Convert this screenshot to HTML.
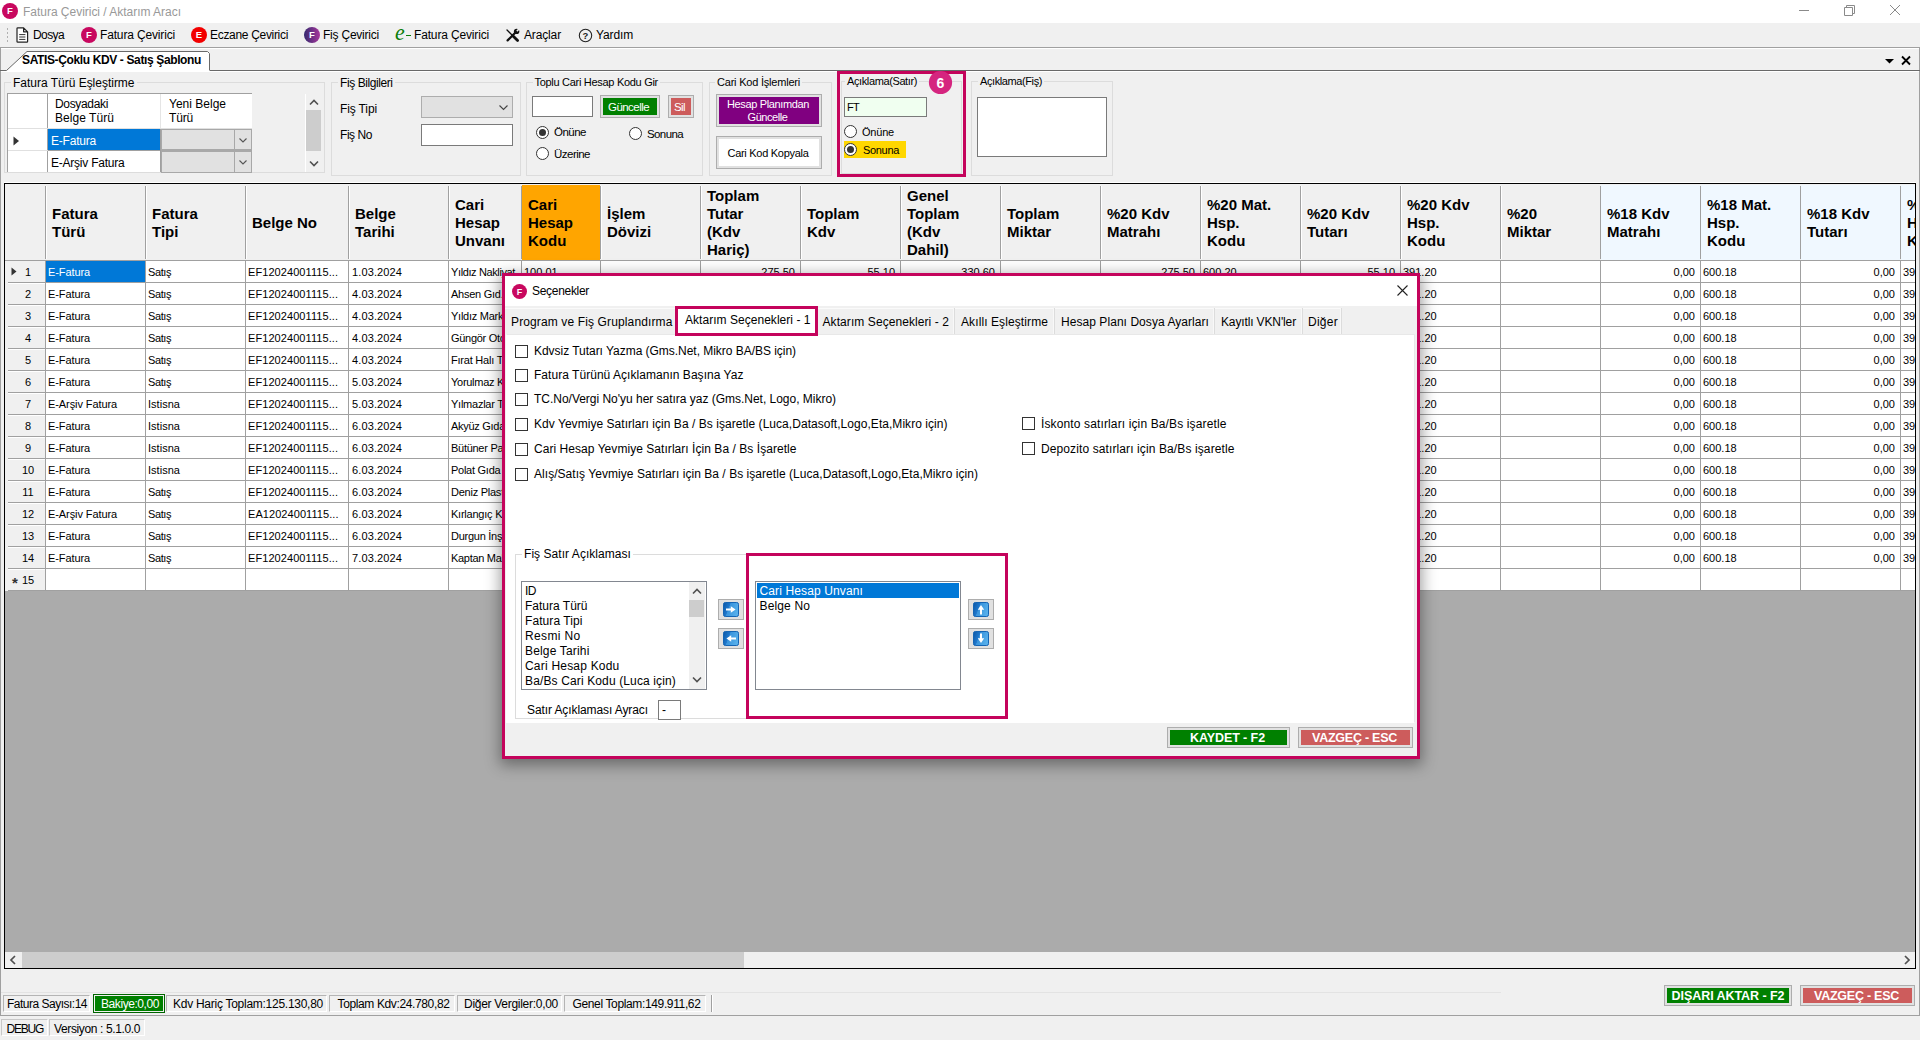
<!DOCTYPE html>
<html lang="tr"><head><meta charset="utf-8"><title>Fatura Çevirici / Aktarım Aracı</title>
<style>
html,body{margin:0;padding:0;}
body{width:1920px;height:1040px;overflow:hidden;background:#f0f0f0;position:relative;font-family:"Liberation Sans",sans-serif;font-size:11px;color:#000;}
.b{position:absolute;box-sizing:border-box;}
.t{position:absolute;white-space:nowrap;display:block;}
svg{position:absolute;overflow:visible;}
.grp{position:absolute;box-sizing:border-box;border:1px solid #dcdcdc;}
.btn{position:absolute;box-sizing:border-box;border:1px solid #adadad;background:#e1e1e1;}
.rad{position:absolute;box-sizing:border-box;width:13px;height:13px;border:1px solid #333;border-radius:50%;background:#fff;}
.rad.on::after{content:"";position:absolute;left:2px;top:2px;width:7px;height:7px;border-radius:50%;background:#333;}
.chk{position:absolute;box-sizing:border-box;width:13px;height:13px;border:1px solid #333;background:#fff;}
</style></head><body>

<div class="b" style="left:0px;top:0px;width:1920px;height:23px;background:#fff;"></div>
<svg style="left:2px;top:3px" width="16" height="16" viewBox="0 0 16 16"><circle cx="8" cy="8" r="8" fill="#c8085f"/><text x="8" y="11.42" font-family="Liberation Sans,sans-serif" font-weight="bold" font-size="9.5" fill="#fff" text-anchor="middle">F</text></svg>
<span class="t" style="left:23.0px;top:4.0px;height:17px;line-height:17px;font-size:12px;letter-spacing:-0.023px;color:#999;">Fatura Çevirici / Aktarım Aracı</span>
<svg style="left:1790px;top:0" width="130" height="23" viewBox="0 0 130 23" fill="none" stroke="#8a8a8a" stroke-width="1"><path d="M9 10.5H19"/><path d="M54.5 7.5h8v8h-8z M56.5 7.5v-2h8v8h-2"/><path d="M100 5l10 10M110 5l-10 10"/></svg>
<div class="b" style="left:7px;top:28px;width:1px;height:2px;background:#b0b0b0;"></div>
<div class="b" style="left:7px;top:32px;width:1px;height:2px;background:#b0b0b0;"></div>
<div class="b" style="left:7px;top:36px;width:1px;height:2px;background:#b0b0b0;"></div>
<div class="b" style="left:7px;top:40px;width:1px;height:2px;background:#b0b0b0;"></div>
<svg style="left:16px;top:27px" width="13" height="16" viewBox="0 0 13 16" fill="#fff" stroke="#222" stroke-width="1.2"><path d="M1 1.6Q1 0.8 1.8 0.8H7.6L11.6 4.8V14.4Q11.6 15.2 10.8 15.2H1.8Q1 15.2 1 14.4z M7.6 0.8V4.8H11.6" stroke-linejoin="round"/><path d="M3.2 7.6h6.2M3.2 10h6.2M3.2 12.4h6.2" stroke="#333" stroke-width="1"/></svg>
<span class="t" style="left:33.0px;top:26.5px;height:17px;line-height:17px;font-size:12px;letter-spacing:-0.603px;color:#000;">Dosya</span>
<svg style="left:81px;top:27px" width="16" height="16" viewBox="0 0 16 16"><circle cx="8" cy="8" r="8" fill="#c8085f"/><text x="8" y="11.42" font-family="Liberation Sans,sans-serif" font-weight="bold" font-size="9.5" fill="#fff" text-anchor="middle">F</text></svg>
<span class="t" style="left:100.0px;top:26.5px;height:17px;line-height:17px;font-size:12px;letter-spacing:-0.157px;color:#000;">Fatura Çevirici</span>
<svg style="left:191px;top:27px" width="16" height="16" viewBox="0 0 16 16"><circle cx="8" cy="8" r="8" fill="#f20000"/><text x="8" y="11.42" font-family="Liberation Sans,sans-serif" font-weight="bold" font-size="9.5" fill="#fff" text-anchor="middle">E</text></svg>
<span class="t" style="left:210.0px;top:26.5px;height:17px;line-height:17px;font-size:12px;letter-spacing:-0.313px;color:#000;">Eczane Çevirici</span>
<svg width="0" height="0" style="left:0;top:0"><defs><linearGradient id="fg1" x1="0" y1="0" x2="1" y2="0"><stop offset="0" stop-color="#35296f"/><stop offset="1" stop-color="#a8389c"/></linearGradient></defs></svg>
<svg style="left:304px;top:27px" width="16" height="16" viewBox="0 0 16 16"><circle cx="8" cy="8" r="8" fill="url(#fg1)"/><text x="8" y="11.42" font-family="Liberation Sans,sans-serif" font-weight="bold" font-size="9.5" fill="#fff" text-anchor="middle">F</text></svg>
<span class="t" style="left:323.0px;top:26.5px;height:17px;line-height:17px;font-size:12px;letter-spacing:-0.222px;color:#000;">Fiş Çevirici</span>
<span class="t" style="left:395px;top:20px;height:26px;line-height:26px;font-size:23px;font-style:italic;color:#0a7d0a;font-family:'Liberation Serif',serif;transform:scaleX(0.95);transform-origin:left;">e</span>
<div class="b" style="left:405.5px;top:34.5px;width:5.5px;height:1.6px;background:#0a7d0a;"></div>
<span class="t" style="left:414.0px;top:26.5px;height:17px;line-height:17px;font-size:12px;letter-spacing:-0.157px;color:#000;">Fatura Çevirici</span>
<svg style="left:505px;top:28px" width="15" height="15" viewBox="0 0 15 15" fill="none" stroke="#111" stroke-linecap="round"><path d="M2 2L7.5 7.5" stroke-width="1.3"/><path d="M8 8L12.6 12.6" stroke-width="2.8"/><path d="M11.2 3.8L2.6 12.4" stroke-width="2.2"/><circle cx="11.6" cy="3.4" r="2.7" fill="#111" stroke="none"/><path d="M11.9 3.1L14.5 0.5" stroke="#f0f0f0" stroke-width="1.7" stroke-linecap="butt"/></svg>
<span class="t" style="left:524.0px;top:26.5px;height:17px;line-height:17px;font-size:12px;letter-spacing:-0.144px;color:#000;">Araçlar</span>
<svg style="left:578px;top:28px" width="15" height="15" viewBox="0 0 15 15"><circle cx="7.5" cy="7.5" r="6.2" fill="none" stroke="#222" stroke-width="1.1"/><text x="7.5" y="11" font-family="Liberation Sans,sans-serif" font-size="9.5" font-weight="bold" text-anchor="middle" fill="#222">?</text></svg>
<span class="t" style="left:596.0px;top:26.5px;height:17px;line-height:17px;font-size:12px;letter-spacing:-0.131px;color:#000;">Yardım</span>
<div class="b" style="left:0px;top:47px;width:1920px;height:1px;background:#a0a0a0;"></div>
<div class="b" style="left:0px;top:48px;width:1px;height:990px;background:#a0a0a0;"></div>
<div class="b" style="left:1919px;top:48px;width:1px;height:968px;background:#a0a0a0;"></div>
<div class="b" style="left:210px;top:70px;width:1710px;height:1px;background:#696969;"></div>
<div class="b" style="left:1px;top:71px;width:1918px;height:1px;background:#fff;"></div>
<div class="b" style="left:1px;top:48px;width:1918px;height:1px;background:#fff;"></div>
<svg style="left:0;top:48px" width="220" height="24" viewBox="0 0 220 24"><path d="M6.5 22.5 L27 3.5 H207.5 L209.5 5.5 V24 H5z" fill="#fff" stroke="none"/><path d="M0 22.5 H6.5 L27 3.5 H207.5 L209.5 5.5 V22.5" fill="none" stroke="#696969" stroke-width="1"/></svg>
<span class="t" style="left:22.0px;top:52.0px;height:17px;line-height:17px;font-size:12px;font-weight:bold;letter-spacing:-0.370px;color:#000;">SATIS-Çoklu KDV - Satış Şablonu</span>
<svg style="left:1884px;top:55px" width="28" height="12" viewBox="0 0 28 12"><path d="M1 4h9l-4.5 4.5z" fill="#000"/><path d="M18 1.5l8 8M26 1.5l-8 8" stroke="#000" stroke-width="1.8" fill="none"/></svg>
<div class="grp" style="left:4px;top:82px;width:321px;height:91px;"></div>
<div class="b" style="left:11px;top:80px;width:125.5px;height:5px;background:#f0f0f0;"></div>
<span class="t" style="left:13.0px;top:75.0px;height:17px;line-height:17px;font-size:12px;letter-spacing:-0.014px;color:#000;">Fatura Türü Eşleştirme</span>
<div class="b" style="left:7px;top:93px;width:245px;height:79px;background:#fff;border-left:1px solid #a0a0a0;border-top:1px solid #a0a0a0;"></div>
<div class="b" style="left:47px;top:94px;width:1px;height:78px;background:#a0a0a0;"></div>
<div class="b" style="left:160px;top:94px;width:1px;height:35px;background:#e5e5e5;"></div>
<div class="b" style="left:8px;top:128px;width:244px;height:1px;background:#e0e0e0;"></div>
<div class="b" style="left:8px;top:150px;width:40px;height:1px;background:#e0e0e0;"></div>
<div class="b" style="left:48px;top:150px;width:112px;height:1px;background:#a0a0a0;"></div>
<div class="b" style="left:160px;top:129px;width:1px;height:43px;background:#a0a0a0;"></div>
<span class="t" style="left:55.0px;top:96.0px;height:17px;line-height:17px;font-size:12px;letter-spacing:-0.336px;color:#000;">Dosyadaki</span>
<span class="t" style="left:55.0px;top:110.0px;height:17px;line-height:17px;font-size:12px;letter-spacing:0.052px;color:#000;">Belge Türü</span>
<span class="t" style="left:169.0px;top:96.0px;height:17px;line-height:17px;font-size:12px;letter-spacing:0.006px;color:#000;">Yeni Belge</span>
<span class="t" style="left:169.0px;top:110.0px;height:17px;line-height:17px;font-size:12px;letter-spacing:-0.168px;color:#000;">Türü</span>
<div class="b" style="left:48px;top:129px;width:112px;height:21px;background:#0078d7;"></div>
<span class="t" style="left:51.0px;top:133.0px;height:17px;line-height:17px;font-size:12px;letter-spacing:-0.210px;color:#fff;">E-Fatura</span>
<span class="t" style="left:51.0px;top:155.0px;height:17px;line-height:17px;font-size:12px;letter-spacing:-0.227px;color:#000;">E-Arşiv Fatura</span>
<svg style="left:13px;top:136px" width="7" height="10" viewBox="0 0 7 10"><path d="M0.5 0.5v9l5.5-4.5z" fill="#333"/></svg>
<div class="b" style="left:161px;top:129px;width:91px;height:22px;background:#a8a8a8;"></div>
<div class="b" style="left:162px;top:130px;width:72px;height:19px;background:#e1e1e1;"></div>
<div class="b" style="left:235px;top:130px;width:16px;height:19px;background:#e1e1e1;"></div>
<svg style="left:238.5px;top:137.75px" width="8" height="4.5" viewBox="0 0 8 4.5"><path d="M0.5 0.5L4 4L7.5 0.5" fill="none" stroke="#555" stroke-width="1.1"/></svg>
<div class="b" style="left:161px;top:151px;width:91px;height:22px;background:#a8a8a8;"></div>
<div class="b" style="left:162px;top:152px;width:72px;height:20px;background:#e1e1e1;"></div>
<div class="b" style="left:235px;top:152px;width:16px;height:20px;background:#e1e1e1;"></div>
<svg style="left:238.5px;top:159.75px" width="8" height="4.5" viewBox="0 0 8 4.5"><path d="M0.5 0.5L4 4L7.5 0.5" fill="none" stroke="#555" stroke-width="1.1"/></svg>
<div class="b" style="left:305px;top:94px;width:1px;height:78px;background:#fff;"></div>
<div class="b" style="left:306px;top:94px;width:16px;height:78px;background:#f0f0f0;"></div>
<div class="b" style="left:306px;top:110px;width:15px;height:41px;background:#cdcdcd;"></div>
<svg style="left:308.5px;top:99px" width="10" height="7" viewBox="0 0 10 7"><path d="M1 5.5L5 1.5L9 5.5" fill="none" stroke="#505050" stroke-width="1.6"/></svg>
<svg style="left:308.5px;top:160px" width="10" height="7" viewBox="0 0 10 7"><path d="M1 1.5L5 5.5L9 1.5" fill="none" stroke="#505050" stroke-width="1.6"/></svg>
<div class="grp" style="left:331px;top:82px;width:190px;height:94px;"></div>
<div class="b" style="left:338px;top:80px;width:56.5px;height:5px;background:#f0f0f0;"></div>
<span class="t" style="left:340.0px;top:75.0px;height:17px;line-height:17px;font-size:12px;letter-spacing:-0.424px;color:#000;">Fiş Bilgileri</span>
<span class="t" style="left:340.0px;top:100.5px;height:17px;line-height:17px;font-size:12px;letter-spacing:-0.125px;color:#000;">Fiş Tipi</span>
<span class="t" style="left:340.0px;top:127.0px;height:17px;line-height:17px;font-size:12px;letter-spacing:-0.445px;color:#000;">Fiş No</span>
<div class="b" style="left:421px;top:96px;width:92px;height:22px;background:#e1e1e1;border:1px solid #adadad;"></div>
<svg style="left:499px;top:105px" width="9" height="5" viewBox="0 0 9 5"><path d="M0.5 0.5L4.5 4.5L8.5 0.5" fill="none" stroke="#444" stroke-width="1.1"/></svg>
<div class="b" style="left:421px;top:124px;width:92px;height:22px;background:#fff;border:1px solid #7a7a7a;"></div>
<div class="grp" style="left:526px;top:82px;width:177px;height:94px;"></div>
<div class="b" style="left:532.5px;top:80px;width:127.5px;height:5px;background:#f0f0f0;"></div>
<span class="t" style="left:534.5px;top:75.0px;height:15px;line-height:15px;font-size:11px;letter-spacing:-0.294px;color:#000;">Toplu Cari Hesap Kodu Gir</span>
<div class="b" style="left:532px;top:96px;width:61px;height:21px;background:#fff;border:1px solid #7a7a7a;"></div>
<div class="b" style="left:600px;top:95px;width:60px;height:23px;background:#e1e1e1;border:1px solid #adadad;"></div>
<div class="b" style="left:603px;top:98px;width:54px;height:17px;background:#008000;"></div>
<span class="t" style="left:608.0px;top:98.5px;height:16px;line-height:16px;font-size:11.5px;letter-spacing:-0.549px;color:#fff;">Güncelle</span>
<div class="b" style="left:668px;top:95px;width:26px;height:23px;background:#e1e1e1;border:1px solid #adadad;"></div>
<div class="b" style="left:671px;top:98px;width:20px;height:17px;background:#cd5c5c;"></div>
<span class="t" style="left:674.0px;top:98.5px;height:16px;line-height:16px;font-size:11.5px;letter-spacing:-0.593px;color:#fff;">Sil</span>
<div class="rad on" style="left:535.5px;top:125.5px;"></div>
<span class="t" style="left:554.0px;top:123.5px;height:16px;line-height:16px;font-size:11.5px;letter-spacing:-0.506px;color:#000;">Önüne</span>
<div class="rad" style="left:628.5px;top:127px;"></div>
<span class="t" style="left:647.0px;top:125.5px;height:16px;line-height:16px;font-size:11.5px;letter-spacing:-0.609px;color:#000;">Sonuna</span>
<div class="rad" style="left:535.5px;top:147px;"></div>
<span class="t" style="left:554.0px;top:145.5px;height:16px;line-height:16px;font-size:11.5px;letter-spacing:-0.518px;color:#000;">Üzerine</span>
<div class="grp" style="left:709px;top:82px;width:123px;height:94px;"></div>
<div class="b" style="left:715px;top:80px;width:87px;height:5px;background:#f0f0f0;"></div>
<span class="t" style="left:717.0px;top:75.0px;height:15px;line-height:15px;font-size:11px;letter-spacing:-0.211px;color:#000;">Cari Kod İşlemleri</span>
<div class="b" style="left:716px;top:94px;width:106px;height:33px;background:#e1e1e1;border:1px solid #adadad;"></div>
<div class="b" style="left:719px;top:97px;width:100px;height:27px;background:#800080;"></div>
<span class="t" style="left:727.0px;top:96.5px;height:15px;line-height:15px;font-size:11px;letter-spacing:-0.363px;color:#fff;">Hesap Planımdan</span>
<span class="t" style="left:747.5px;top:109.5px;height:15px;line-height:15px;font-size:11px;letter-spacing:-0.427px;color:#fff;">Güncelle</span>
<div class="b" style="left:716px;top:136px;width:106px;height:33px;background:#e1e1e1;border:1px solid #adadad;"></div>
<div class="b" style="left:719px;top:139px;width:100px;height:27px;background:#fff;"></div>
<span class="t" style="left:727.5px;top:145.5px;height:15px;line-height:15px;font-size:11px;letter-spacing:-0.288px;color:#000;">Cari Kod Kopyala</span>
<div class="b" style="left:837px;top:70.5px;width:129px;height:106.5px;border:3px solid #c4045c;"></div>
<div class="grp" style="left:841px;top:81px;width:121px;height:93px;"></div>
<div class="b" style="left:845px;top:79px;width:74px;height:5px;background:#f0f0f0;"></div>
<span class="t" style="left:847.0px;top:74.0px;height:15px;line-height:15px;font-size:11px;letter-spacing:-0.386px;color:#000;">Açıklama(Satır)</span>
<div class="b" style="left:844px;top:97px;width:83px;height:20px;background:#f0fff0;border:1px solid #7a7a7a;"></div>
<span class="t" style="left:847.0px;top:99.5px;height:15px;line-height:15px;font-size:11px;letter-spacing:-0.719px;color:#000;">FT</span>
<div class="rad" style="left:843.5px;top:125px;"></div>
<span class="t" style="left:862.0px;top:124.5px;height:15px;line-height:15px;font-size:11px;letter-spacing:-0.205px;color:#000;">Önüne</span>
<div class="b" style="left:844px;top:141px;width:62px;height:17px;background:#ffd700;"></div>
<div class="rad on" style="left:843.5px;top:143px;"></div>
<span class="t" style="left:863.0px;top:142.5px;height:15px;line-height:15px;font-size:11px;letter-spacing:-0.321px;color:#000;">Sonuna</span>
<svg style="left:929px;top:70.5px" width="23" height="23" viewBox="0 0 23 23"><circle cx="11.5" cy="11.5" r="11.6" fill="#d5257f"/><text x="11.5" y="16.5" font-family="Liberation Sans,sans-serif" font-weight="bold" font-size="14" fill="#fff" text-anchor="middle">6</text></svg>
<div class="grp" style="left:971px;top:81px;width:142px;height:95px;"></div>
<div class="b" style="left:978px;top:79px;width:66px;height:5px;background:#f0f0f0;"></div>
<span class="t" style="left:980.0px;top:74.0px;height:15px;line-height:15px;font-size:11px;letter-spacing:-0.402px;color:#000;">Açıklama(Fiş)</span>
<div class="b" style="left:977px;top:97px;width:130px;height:60px;background:#fff;border:1px solid #7a7a7a;"></div>
<div class="b" style="left:4px;top:182px;width:1912px;height:1px;background:#fff;"></div>
<div class="b" style="left:4px;top:183px;width:1912px;height:786px;background:#ababab;border:1px solid #000;"></div>
<div class="b" style="left:5px;top:184px;width:1910px;height:77px;background:#f0f0f0;overflow:hidden;"></div>
<div class="b" style="left:5px;top:260px;width:1910px;height:1px;background:#a0a0a0;"></div>
<div class="b" style="left:5px;top:184px;width:1910px;height:407px;overflow:hidden;">
<div class="b" style="left:40px;top:2px;width:1px;height:73px;background:#a0a0a0;"></div>
<div class="b" style="left:41px;top:2px;width:1px;height:73px;background:#fff;"></div>
<div class="b" style="left:140px;top:2px;width:1px;height:73px;background:#a0a0a0;"></div>
<div class="b" style="left:141px;top:2px;width:1px;height:73px;background:#fff;"></div>
<span class="t" style="left:47.0px;top:20.5px;height:18px;line-height:18px;font-size:15px;font-weight:bold;color:#000;">Fatura</span>
<span class="t" style="left:47.0px;top:38.5px;height:18px;line-height:18px;font-size:15px;font-weight:bold;color:#000;">Türü</span>
<div class="b" style="left:240px;top:2px;width:1px;height:73px;background:#a0a0a0;"></div>
<div class="b" style="left:241px;top:2px;width:1px;height:73px;background:#fff;"></div>
<span class="t" style="left:147.0px;top:20.5px;height:18px;line-height:18px;font-size:15px;font-weight:bold;color:#000;">Fatura</span>
<span class="t" style="left:147.0px;top:38.5px;height:18px;line-height:18px;font-size:15px;font-weight:bold;color:#000;">Tipi</span>
<div class="b" style="left:343px;top:2px;width:1px;height:73px;background:#a0a0a0;"></div>
<div class="b" style="left:344px;top:2px;width:1px;height:73px;background:#fff;"></div>
<span class="t" style="left:247.0px;top:29.5px;height:18px;line-height:18px;font-size:15px;font-weight:bold;color:#000;">Belge No</span>
<div class="b" style="left:443px;top:2px;width:1px;height:73px;background:#a0a0a0;"></div>
<div class="b" style="left:444px;top:2px;width:1px;height:73px;background:#fff;"></div>
<span class="t" style="left:350.0px;top:20.5px;height:18px;line-height:18px;font-size:15px;font-weight:bold;color:#000;">Belge</span>
<span class="t" style="left:350.0px;top:38.5px;height:18px;line-height:18px;font-size:15px;font-weight:bold;color:#000;">Tarihi</span>
<div class="b" style="left:516px;top:2px;width:1px;height:73px;background:#a0a0a0;"></div>
<div class="b" style="left:517px;top:2px;width:1px;height:73px;background:#fff;"></div>
<span class="t" style="left:450.0px;top:11.5px;height:18px;line-height:18px;font-size:15px;font-weight:bold;color:#000;">Cari</span>
<span class="t" style="left:450.0px;top:29.5px;height:18px;line-height:18px;font-size:15px;font-weight:bold;color:#000;">Hesap</span>
<span class="t" style="left:450.0px;top:47.5px;height:18px;line-height:18px;font-size:15px;font-weight:bold;color:#000;">Unvanı</span>
<div class="b" style="left:517px;top:1px;width:78px;height:75px;background:#ffa500;"></div>
<div class="b" style="left:595px;top:2px;width:1px;height:73px;background:#a0a0a0;"></div>
<div class="b" style="left:596px;top:2px;width:1px;height:73px;background:#fff;"></div>
<span class="t" style="left:523.0px;top:11.5px;height:18px;line-height:18px;font-size:15px;font-weight:bold;color:#000;">Cari</span>
<span class="t" style="left:523.0px;top:29.5px;height:18px;line-height:18px;font-size:15px;font-weight:bold;color:#000;">Hesap</span>
<span class="t" style="left:523.0px;top:47.5px;height:18px;line-height:18px;font-size:15px;font-weight:bold;color:#000;">Kodu</span>
<div class="b" style="left:695px;top:2px;width:1px;height:73px;background:#a0a0a0;"></div>
<div class="b" style="left:696px;top:2px;width:1px;height:73px;background:#fff;"></div>
<span class="t" style="left:602.0px;top:20.5px;height:18px;line-height:18px;font-size:15px;font-weight:bold;color:#000;">İşlem</span>
<span class="t" style="left:602.0px;top:38.5px;height:18px;line-height:18px;font-size:15px;font-weight:bold;color:#000;">Dövizi</span>
<div class="b" style="left:795px;top:2px;width:1px;height:73px;background:#a0a0a0;"></div>
<div class="b" style="left:796px;top:2px;width:1px;height:73px;background:#fff;"></div>
<span class="t" style="left:702.0px;top:2.5px;height:18px;line-height:18px;font-size:15px;font-weight:bold;color:#000;">Toplam</span>
<span class="t" style="left:702.0px;top:20.5px;height:18px;line-height:18px;font-size:15px;font-weight:bold;color:#000;">Tutar</span>
<span class="t" style="left:702.0px;top:38.5px;height:18px;line-height:18px;font-size:15px;font-weight:bold;color:#000;">(Kdv</span>
<span class="t" style="left:702.0px;top:56.5px;height:18px;line-height:18px;font-size:15px;font-weight:bold;color:#000;">Hariç)</span>
<div class="b" style="left:895px;top:2px;width:1px;height:73px;background:#a0a0a0;"></div>
<div class="b" style="left:896px;top:2px;width:1px;height:73px;background:#fff;"></div>
<span class="t" style="left:802.0px;top:20.5px;height:18px;line-height:18px;font-size:15px;font-weight:bold;color:#000;">Toplam</span>
<span class="t" style="left:802.0px;top:38.5px;height:18px;line-height:18px;font-size:15px;font-weight:bold;color:#000;">Kdv</span>
<div class="b" style="left:995px;top:2px;width:1px;height:73px;background:#a0a0a0;"></div>
<div class="b" style="left:996px;top:2px;width:1px;height:73px;background:#fff;"></div>
<span class="t" style="left:902.0px;top:2.5px;height:18px;line-height:18px;font-size:15px;font-weight:bold;color:#000;">Genel</span>
<span class="t" style="left:902.0px;top:20.5px;height:18px;line-height:18px;font-size:15px;font-weight:bold;color:#000;">Toplam</span>
<span class="t" style="left:902.0px;top:38.5px;height:18px;line-height:18px;font-size:15px;font-weight:bold;color:#000;">(Kdv</span>
<span class="t" style="left:902.0px;top:56.5px;height:18px;line-height:18px;font-size:15px;font-weight:bold;color:#000;">Dahil)</span>
<div class="b" style="left:1095px;top:2px;width:1px;height:73px;background:#a0a0a0;"></div>
<div class="b" style="left:1096px;top:2px;width:1px;height:73px;background:#fff;"></div>
<span class="t" style="left:1002.0px;top:20.5px;height:18px;line-height:18px;font-size:15px;font-weight:bold;color:#000;">Toplam</span>
<span class="t" style="left:1002.0px;top:38.5px;height:18px;line-height:18px;font-size:15px;font-weight:bold;color:#000;">Miktar</span>
<div class="b" style="left:1195px;top:2px;width:1px;height:73px;background:#a0a0a0;"></div>
<div class="b" style="left:1196px;top:2px;width:1px;height:73px;background:#fff;"></div>
<span class="t" style="left:1102.0px;top:20.5px;height:18px;line-height:18px;font-size:15px;font-weight:bold;color:#000;">%20 Kdv</span>
<span class="t" style="left:1102.0px;top:38.5px;height:18px;line-height:18px;font-size:15px;font-weight:bold;color:#000;">Matrahı</span>
<div class="b" style="left:1295px;top:2px;width:1px;height:73px;background:#a0a0a0;"></div>
<div class="b" style="left:1296px;top:2px;width:1px;height:73px;background:#fff;"></div>
<span class="t" style="left:1202.0px;top:11.5px;height:18px;line-height:18px;font-size:15px;font-weight:bold;color:#000;">%20 Mat.</span>
<span class="t" style="left:1202.0px;top:29.5px;height:18px;line-height:18px;font-size:15px;font-weight:bold;color:#000;">Hsp.</span>
<span class="t" style="left:1202.0px;top:47.5px;height:18px;line-height:18px;font-size:15px;font-weight:bold;color:#000;">Kodu</span>
<div class="b" style="left:1395px;top:2px;width:1px;height:73px;background:#a0a0a0;"></div>
<div class="b" style="left:1396px;top:2px;width:1px;height:73px;background:#fff;"></div>
<span class="t" style="left:1302.0px;top:20.5px;height:18px;line-height:18px;font-size:15px;font-weight:bold;color:#000;">%20 Kdv</span>
<span class="t" style="left:1302.0px;top:38.5px;height:18px;line-height:18px;font-size:15px;font-weight:bold;color:#000;">Tutarı</span>
<div class="b" style="left:1495px;top:2px;width:1px;height:73px;background:#a0a0a0;"></div>
<div class="b" style="left:1496px;top:2px;width:1px;height:73px;background:#fff;"></div>
<span class="t" style="left:1402.0px;top:11.5px;height:18px;line-height:18px;font-size:15px;font-weight:bold;color:#000;">%20 Kdv</span>
<span class="t" style="left:1402.0px;top:29.5px;height:18px;line-height:18px;font-size:15px;font-weight:bold;color:#000;">Hsp.</span>
<span class="t" style="left:1402.0px;top:47.5px;height:18px;line-height:18px;font-size:15px;font-weight:bold;color:#000;">Kodu</span>
<div class="b" style="left:1595px;top:2px;width:1px;height:73px;background:#a0a0a0;"></div>
<div class="b" style="left:1596px;top:2px;width:1px;height:73px;background:#fff;"></div>
<span class="t" style="left:1502.0px;top:20.5px;height:18px;line-height:18px;font-size:15px;font-weight:bold;color:#000;">%20</span>
<span class="t" style="left:1502.0px;top:38.5px;height:18px;line-height:18px;font-size:15px;font-weight:bold;color:#000;">Miktar</span>
<div class="b" style="left:1596px;top:1px;width:99px;height:75px;background:#f0f8ff;"></div>
<div class="b" style="left:1695px;top:2px;width:1px;height:73px;background:#a0a0a0;"></div>
<div class="b" style="left:1696px;top:2px;width:1px;height:73px;background:#fff;"></div>
<span class="t" style="left:1602.0px;top:20.5px;height:18px;line-height:18px;font-size:15px;font-weight:bold;color:#000;">%18 Kdv</span>
<span class="t" style="left:1602.0px;top:38.5px;height:18px;line-height:18px;font-size:15px;font-weight:bold;color:#000;">Matrahı</span>
<div class="b" style="left:1696px;top:1px;width:99px;height:75px;background:#f0f8ff;"></div>
<div class="b" style="left:1795px;top:2px;width:1px;height:73px;background:#a0a0a0;"></div>
<div class="b" style="left:1796px;top:2px;width:1px;height:73px;background:#fff;"></div>
<span class="t" style="left:1702.0px;top:11.5px;height:18px;line-height:18px;font-size:15px;font-weight:bold;color:#000;">%18 Mat.</span>
<span class="t" style="left:1702.0px;top:29.5px;height:18px;line-height:18px;font-size:15px;font-weight:bold;color:#000;">Hsp.</span>
<span class="t" style="left:1702.0px;top:47.5px;height:18px;line-height:18px;font-size:15px;font-weight:bold;color:#000;">Kodu</span>
<div class="b" style="left:1796px;top:1px;width:99px;height:75px;background:#f0f8ff;"></div>
<div class="b" style="left:1895px;top:2px;width:1px;height:73px;background:#a0a0a0;"></div>
<div class="b" style="left:1896px;top:2px;width:1px;height:73px;background:#fff;"></div>
<span class="t" style="left:1802.0px;top:20.5px;height:18px;line-height:18px;font-size:15px;font-weight:bold;color:#000;">%18 Kdv</span>
<span class="t" style="left:1802.0px;top:38.5px;height:18px;line-height:18px;font-size:15px;font-weight:bold;color:#000;">Tutarı</span>
<div class="b" style="left:1896px;top:1px;width:14px;height:75px;background:#f0f8ff;"></div>
<div class="b" style="left:1910px;top:2px;width:1px;height:73px;background:#a0a0a0;"></div>
<div class="b" style="left:1911px;top:2px;width:1px;height:73px;background:#fff;"></div>
<span class="t" style="left:1902.0px;top:11.5px;height:18px;line-height:18px;font-size:15px;font-weight:bold;color:#000;">%18 Kdv</span>
<span class="t" style="left:1902.0px;top:29.5px;height:18px;line-height:18px;font-size:15px;font-weight:bold;color:#000;">Hsp.</span>
<span class="t" style="left:1902.0px;top:47.5px;height:18px;line-height:18px;font-size:15px;font-weight:bold;color:#000;">Kodu</span>
<div class="b" style="left:0px;top:77px;width:1910px;height:330px;background:#fff;"></div>
<div class="b" style="left:0px;top:77px;width:40px;height:330px;background:#f0f0f0;"></div>
<div class="b" style="left:40px;top:77px;width:1px;height:330px;background:#a0a0a0;"></div>
<div class="b" style="left:140px;top:77px;width:1px;height:330px;background:#a0a0a0;"></div>
<div class="b" style="left:240px;top:77px;width:1px;height:330px;background:#a0a0a0;"></div>
<div class="b" style="left:343px;top:77px;width:1px;height:330px;background:#a0a0a0;"></div>
<div class="b" style="left:443px;top:77px;width:1px;height:330px;background:#a0a0a0;"></div>
<div class="b" style="left:516px;top:77px;width:1px;height:330px;background:#a0a0a0;"></div>
<div class="b" style="left:595px;top:77px;width:1px;height:330px;background:#a0a0a0;"></div>
<div class="b" style="left:695px;top:77px;width:1px;height:330px;background:#a0a0a0;"></div>
<div class="b" style="left:795px;top:77px;width:1px;height:330px;background:#a0a0a0;"></div>
<div class="b" style="left:895px;top:77px;width:1px;height:330px;background:#a0a0a0;"></div>
<div class="b" style="left:995px;top:77px;width:1px;height:330px;background:#a0a0a0;"></div>
<div class="b" style="left:1095px;top:77px;width:1px;height:330px;background:#a0a0a0;"></div>
<div class="b" style="left:1195px;top:77px;width:1px;height:330px;background:#a0a0a0;"></div>
<div class="b" style="left:1295px;top:77px;width:1px;height:330px;background:#a0a0a0;"></div>
<div class="b" style="left:1395px;top:77px;width:1px;height:330px;background:#a0a0a0;"></div>
<div class="b" style="left:1495px;top:77px;width:1px;height:330px;background:#a0a0a0;"></div>
<div class="b" style="left:1595px;top:77px;width:1px;height:330px;background:#a0a0a0;"></div>
<div class="b" style="left:1695px;top:77px;width:1px;height:330px;background:#a0a0a0;"></div>
<div class="b" style="left:1795px;top:77px;width:1px;height:330px;background:#a0a0a0;"></div>
<div class="b" style="left:1895px;top:77px;width:1px;height:330px;background:#a0a0a0;"></div>
<div class="b" style="left:1910px;top:77px;width:1px;height:330px;background:#a0a0a0;"></div>
<div class="b" style="left:40px;top:98px;width:1870px;height:1px;background:#a0a0a0;"></div>
<div class="b" style="left:3px;top:98px;width:37px;height:1px;background:#a0a0a0;"></div>
<div class="b" style="left:3px;top:99px;width:37px;height:1px;background:#fff;"></div>
<span class="t" style="left:11px;top:79.5px;width:24px;text-align:center;height:16px;line-height:16px;font-size:11px;">1</span>
<div class="b" style="left:41px;top:77px;width:99px;height:21px;background:#0078d7;"></div>
<span class="t" style="left:43.0px;top:81.0px;height:15px;line-height:15px;font-size:11px;letter-spacing:-0.099px;color:#fff;">E-Fatura</span>
<span class="t" style="left:143.0px;top:81.0px;height:15px;line-height:15px;font-size:11px;letter-spacing:-0.414px;color:#000;">Satış</span>
<span class="t" style="left:243.0px;top:81.0px;height:15px;line-height:15px;font-size:11px;letter-spacing:0.070px;color:#000;">EF12024001115...</span>
<span class="t" style="left:347.0px;top:81.0px;height:15px;line-height:15px;font-size:11px;letter-spacing:0.118px;color:#000;">1.03.2024</span>
<span class="t" style="left:446.0px;top:81.0px;height:15px;line-height:15px;font-size:11px;letter-spacing:-0.379px;color:#000;">Yıldız Nakliyat</span>
<span class="t" style="left:519.0px;top:81.0px;height:15px;line-height:15px;font-size:11px;letter-spacing:0.000px;color:#000;">100.01</span>
<span class="t" style="right:1120.0px;top:81.0px;height:15px;line-height:15px;font-size:11px;color:#000;">275,50</span>
<span class="t" style="right:1020.0px;top:81.0px;height:15px;line-height:15px;font-size:11px;color:#000;">55,10</span>
<span class="t" style="right:920.0px;top:81.0px;height:15px;line-height:15px;font-size:11px;color:#000;">330,60</span>
<span class="t" style="right:720.0px;top:81.0px;height:15px;line-height:15px;font-size:11px;color:#000;">275,50</span>
<span class="t" style="left:1198.0px;top:81.0px;height:15px;line-height:15px;font-size:11px;letter-spacing:0.000px;color:#000;">600.20</span>
<span class="t" style="right:520.0px;top:81.0px;height:15px;line-height:15px;font-size:11px;color:#000;">55,10</span>
<span class="t" style="left:1398.0px;top:81.0px;height:15px;line-height:15px;font-size:11px;letter-spacing:0.000px;color:#000;">391.20</span>
<span class="t" style="right:220.0px;top:81.0px;height:15px;line-height:15px;font-size:11px;color:#000;">0,00</span>
<span class="t" style="left:1698.0px;top:81.0px;height:15px;line-height:15px;font-size:11px;letter-spacing:0.000px;color:#000;">600.18</span>
<span class="t" style="right:20.0px;top:81.0px;height:15px;line-height:15px;font-size:11px;color:#000;">0,00</span>
<span class="t" style="left:1898.0px;top:81.0px;height:15px;line-height:15px;font-size:11px;letter-spacing:0.000px;color:#000;">391.18</span>
<div class="b" style="left:40px;top:120px;width:1870px;height:1px;background:#a0a0a0;"></div>
<div class="b" style="left:3px;top:120px;width:37px;height:1px;background:#a0a0a0;"></div>
<div class="b" style="left:3px;top:121px;width:37px;height:1px;background:#fff;"></div>
<span class="t" style="left:11px;top:101.5px;width:24px;text-align:center;height:16px;line-height:16px;font-size:11px;">2</span>
<span class="t" style="left:43.0px;top:103.0px;height:15px;line-height:15px;font-size:11px;letter-spacing:-0.099px;color:#000;">E-Fatura</span>
<span class="t" style="left:143.0px;top:103.0px;height:15px;line-height:15px;font-size:11px;letter-spacing:-0.414px;color:#000;">Satış</span>
<span class="t" style="left:243.0px;top:103.0px;height:15px;line-height:15px;font-size:11px;letter-spacing:0.070px;color:#000;">EF12024001115...</span>
<span class="t" style="left:347.0px;top:103.0px;height:15px;line-height:15px;font-size:11px;letter-spacing:0.118px;color:#000;">4.03.2024</span>
<span class="t" style="left:446.0px;top:103.0px;height:15px;line-height:15px;font-size:11px;letter-spacing:-0.255px;color:#000;">Ahsen Gıd...</span>
<span class="t" style="left:519.0px;top:103.0px;height:15px;line-height:15px;font-size:11px;letter-spacing:0.000px;color:#000;">100.01</span>
<span class="t" style="right:1120.0px;top:103.0px;height:15px;line-height:15px;font-size:11px;color:#000;">275,50</span>
<span class="t" style="right:1020.0px;top:103.0px;height:15px;line-height:15px;font-size:11px;color:#000;">55,10</span>
<span class="t" style="right:920.0px;top:103.0px;height:15px;line-height:15px;font-size:11px;color:#000;">330,60</span>
<span class="t" style="right:720.0px;top:103.0px;height:15px;line-height:15px;font-size:11px;color:#000;">275,50</span>
<span class="t" style="left:1198.0px;top:103.0px;height:15px;line-height:15px;font-size:11px;letter-spacing:0.000px;color:#000;">600.20</span>
<span class="t" style="right:520.0px;top:103.0px;height:15px;line-height:15px;font-size:11px;color:#000;">55,10</span>
<span class="t" style="left:1398.0px;top:103.0px;height:15px;line-height:15px;font-size:11px;letter-spacing:0.000px;color:#000;">391.20</span>
<span class="t" style="right:220.0px;top:103.0px;height:15px;line-height:15px;font-size:11px;color:#000;">0,00</span>
<span class="t" style="left:1698.0px;top:103.0px;height:15px;line-height:15px;font-size:11px;letter-spacing:0.000px;color:#000;">600.18</span>
<span class="t" style="right:20.0px;top:103.0px;height:15px;line-height:15px;font-size:11px;color:#000;">0,00</span>
<span class="t" style="left:1898.0px;top:103.0px;height:15px;line-height:15px;font-size:11px;letter-spacing:0.000px;color:#000;">391.18</span>
<div class="b" style="left:40px;top:142px;width:1870px;height:1px;background:#a0a0a0;"></div>
<div class="b" style="left:3px;top:142px;width:37px;height:1px;background:#a0a0a0;"></div>
<div class="b" style="left:3px;top:143px;width:37px;height:1px;background:#fff;"></div>
<span class="t" style="left:11px;top:123.5px;width:24px;text-align:center;height:16px;line-height:16px;font-size:11px;">3</span>
<span class="t" style="left:43.0px;top:125.0px;height:15px;line-height:15px;font-size:11px;letter-spacing:-0.099px;color:#000;">E-Fatura</span>
<span class="t" style="left:143.0px;top:125.0px;height:15px;line-height:15px;font-size:11px;letter-spacing:-0.414px;color:#000;">Satış</span>
<span class="t" style="left:243.0px;top:125.0px;height:15px;line-height:15px;font-size:11px;letter-spacing:0.070px;color:#000;">EF12024001115...</span>
<span class="t" style="left:347.0px;top:125.0px;height:15px;line-height:15px;font-size:11px;letter-spacing:0.118px;color:#000;">4.03.2024</span>
<span class="t" style="left:446.0px;top:125.0px;height:15px;line-height:15px;font-size:11px;letter-spacing:-0.247px;color:#000;">Yıldız Market</span>
<span class="t" style="left:519.0px;top:125.0px;height:15px;line-height:15px;font-size:11px;letter-spacing:0.000px;color:#000;">100.01</span>
<span class="t" style="right:1120.0px;top:125.0px;height:15px;line-height:15px;font-size:11px;color:#000;">275,50</span>
<span class="t" style="right:1020.0px;top:125.0px;height:15px;line-height:15px;font-size:11px;color:#000;">55,10</span>
<span class="t" style="right:920.0px;top:125.0px;height:15px;line-height:15px;font-size:11px;color:#000;">330,60</span>
<span class="t" style="right:720.0px;top:125.0px;height:15px;line-height:15px;font-size:11px;color:#000;">275,50</span>
<span class="t" style="left:1198.0px;top:125.0px;height:15px;line-height:15px;font-size:11px;letter-spacing:0.000px;color:#000;">600.20</span>
<span class="t" style="right:520.0px;top:125.0px;height:15px;line-height:15px;font-size:11px;color:#000;">55,10</span>
<span class="t" style="left:1398.0px;top:125.0px;height:15px;line-height:15px;font-size:11px;letter-spacing:0.000px;color:#000;">391.20</span>
<span class="t" style="right:220.0px;top:125.0px;height:15px;line-height:15px;font-size:11px;color:#000;">0,00</span>
<span class="t" style="left:1698.0px;top:125.0px;height:15px;line-height:15px;font-size:11px;letter-spacing:0.000px;color:#000;">600.18</span>
<span class="t" style="right:20.0px;top:125.0px;height:15px;line-height:15px;font-size:11px;color:#000;">0,00</span>
<span class="t" style="left:1898.0px;top:125.0px;height:15px;line-height:15px;font-size:11px;letter-spacing:0.000px;color:#000;">391.18</span>
<div class="b" style="left:40px;top:164px;width:1870px;height:1px;background:#a0a0a0;"></div>
<div class="b" style="left:3px;top:164px;width:37px;height:1px;background:#a0a0a0;"></div>
<div class="b" style="left:3px;top:165px;width:37px;height:1px;background:#fff;"></div>
<span class="t" style="left:11px;top:145.5px;width:24px;text-align:center;height:16px;line-height:16px;font-size:11px;">4</span>
<span class="t" style="left:43.0px;top:147.0px;height:15px;line-height:15px;font-size:11px;letter-spacing:-0.099px;color:#000;">E-Fatura</span>
<span class="t" style="left:143.0px;top:147.0px;height:15px;line-height:15px;font-size:11px;letter-spacing:-0.414px;color:#000;">Satış</span>
<span class="t" style="left:243.0px;top:147.0px;height:15px;line-height:15px;font-size:11px;letter-spacing:0.070px;color:#000;">EF12024001115...</span>
<span class="t" style="left:347.0px;top:147.0px;height:15px;line-height:15px;font-size:11px;letter-spacing:0.118px;color:#000;">4.03.2024</span>
<span class="t" style="left:446.0px;top:147.0px;height:15px;line-height:15px;font-size:11px;letter-spacing:-0.287px;color:#000;">Güngör Oto</span>
<span class="t" style="left:519.0px;top:147.0px;height:15px;line-height:15px;font-size:11px;letter-spacing:0.000px;color:#000;">100.01</span>
<span class="t" style="right:1120.0px;top:147.0px;height:15px;line-height:15px;font-size:11px;color:#000;">275,50</span>
<span class="t" style="right:1020.0px;top:147.0px;height:15px;line-height:15px;font-size:11px;color:#000;">55,10</span>
<span class="t" style="right:920.0px;top:147.0px;height:15px;line-height:15px;font-size:11px;color:#000;">330,60</span>
<span class="t" style="right:720.0px;top:147.0px;height:15px;line-height:15px;font-size:11px;color:#000;">275,50</span>
<span class="t" style="left:1198.0px;top:147.0px;height:15px;line-height:15px;font-size:11px;letter-spacing:0.000px;color:#000;">600.20</span>
<span class="t" style="right:520.0px;top:147.0px;height:15px;line-height:15px;font-size:11px;color:#000;">55,10</span>
<span class="t" style="left:1398.0px;top:147.0px;height:15px;line-height:15px;font-size:11px;letter-spacing:0.000px;color:#000;">391.20</span>
<span class="t" style="right:220.0px;top:147.0px;height:15px;line-height:15px;font-size:11px;color:#000;">0,00</span>
<span class="t" style="left:1698.0px;top:147.0px;height:15px;line-height:15px;font-size:11px;letter-spacing:0.000px;color:#000;">600.18</span>
<span class="t" style="right:20.0px;top:147.0px;height:15px;line-height:15px;font-size:11px;color:#000;">0,00</span>
<span class="t" style="left:1898.0px;top:147.0px;height:15px;line-height:15px;font-size:11px;letter-spacing:0.000px;color:#000;">391.18</span>
<div class="b" style="left:40px;top:186px;width:1870px;height:1px;background:#a0a0a0;"></div>
<div class="b" style="left:3px;top:186px;width:37px;height:1px;background:#a0a0a0;"></div>
<div class="b" style="left:3px;top:187px;width:37px;height:1px;background:#fff;"></div>
<span class="t" style="left:11px;top:167.5px;width:24px;text-align:center;height:16px;line-height:16px;font-size:11px;">5</span>
<span class="t" style="left:43.0px;top:169.0px;height:15px;line-height:15px;font-size:11px;letter-spacing:-0.099px;color:#000;">E-Fatura</span>
<span class="t" style="left:143.0px;top:169.0px;height:15px;line-height:15px;font-size:11px;letter-spacing:-0.414px;color:#000;">Satış</span>
<span class="t" style="left:243.0px;top:169.0px;height:15px;line-height:15px;font-size:11px;letter-spacing:0.070px;color:#000;">EF12024001115...</span>
<span class="t" style="left:347.0px;top:169.0px;height:15px;line-height:15px;font-size:11px;letter-spacing:0.118px;color:#000;">4.03.2024</span>
<span class="t" style="left:446.0px;top:169.0px;height:15px;line-height:15px;font-size:11px;letter-spacing:-0.223px;color:#000;">Fırat Halı Tic</span>
<span class="t" style="left:519.0px;top:169.0px;height:15px;line-height:15px;font-size:11px;letter-spacing:0.000px;color:#000;">100.01</span>
<span class="t" style="right:1120.0px;top:169.0px;height:15px;line-height:15px;font-size:11px;color:#000;">275,50</span>
<span class="t" style="right:1020.0px;top:169.0px;height:15px;line-height:15px;font-size:11px;color:#000;">55,10</span>
<span class="t" style="right:920.0px;top:169.0px;height:15px;line-height:15px;font-size:11px;color:#000;">330,60</span>
<span class="t" style="right:720.0px;top:169.0px;height:15px;line-height:15px;font-size:11px;color:#000;">275,50</span>
<span class="t" style="left:1198.0px;top:169.0px;height:15px;line-height:15px;font-size:11px;letter-spacing:0.000px;color:#000;">600.20</span>
<span class="t" style="right:520.0px;top:169.0px;height:15px;line-height:15px;font-size:11px;color:#000;">55,10</span>
<span class="t" style="left:1398.0px;top:169.0px;height:15px;line-height:15px;font-size:11px;letter-spacing:0.000px;color:#000;">391.20</span>
<span class="t" style="right:220.0px;top:169.0px;height:15px;line-height:15px;font-size:11px;color:#000;">0,00</span>
<span class="t" style="left:1698.0px;top:169.0px;height:15px;line-height:15px;font-size:11px;letter-spacing:0.000px;color:#000;">600.18</span>
<span class="t" style="right:20.0px;top:169.0px;height:15px;line-height:15px;font-size:11px;color:#000;">0,00</span>
<span class="t" style="left:1898.0px;top:169.0px;height:15px;line-height:15px;font-size:11px;letter-spacing:0.000px;color:#000;">391.18</span>
<div class="b" style="left:40px;top:208px;width:1870px;height:1px;background:#a0a0a0;"></div>
<div class="b" style="left:3px;top:208px;width:37px;height:1px;background:#a0a0a0;"></div>
<div class="b" style="left:3px;top:209px;width:37px;height:1px;background:#fff;"></div>
<span class="t" style="left:11px;top:189.5px;width:24px;text-align:center;height:16px;line-height:16px;font-size:11px;">6</span>
<span class="t" style="left:43.0px;top:191.0px;height:15px;line-height:15px;font-size:11px;letter-spacing:-0.099px;color:#000;">E-Fatura</span>
<span class="t" style="left:143.0px;top:191.0px;height:15px;line-height:15px;font-size:11px;letter-spacing:-0.414px;color:#000;">Satış</span>
<span class="t" style="left:243.0px;top:191.0px;height:15px;line-height:15px;font-size:11px;letter-spacing:0.070px;color:#000;">EF12024001115...</span>
<span class="t" style="left:347.0px;top:191.0px;height:15px;line-height:15px;font-size:11px;letter-spacing:0.118px;color:#000;">5.03.2024</span>
<span class="t" style="left:446.0px;top:191.0px;height:15px;line-height:15px;font-size:11px;letter-spacing:-0.282px;color:#000;">Yorulmaz Ku</span>
<span class="t" style="left:519.0px;top:191.0px;height:15px;line-height:15px;font-size:11px;letter-spacing:0.000px;color:#000;">100.01</span>
<span class="t" style="right:1120.0px;top:191.0px;height:15px;line-height:15px;font-size:11px;color:#000;">275,50</span>
<span class="t" style="right:1020.0px;top:191.0px;height:15px;line-height:15px;font-size:11px;color:#000;">55,10</span>
<span class="t" style="right:920.0px;top:191.0px;height:15px;line-height:15px;font-size:11px;color:#000;">330,60</span>
<span class="t" style="right:720.0px;top:191.0px;height:15px;line-height:15px;font-size:11px;color:#000;">275,50</span>
<span class="t" style="left:1198.0px;top:191.0px;height:15px;line-height:15px;font-size:11px;letter-spacing:0.000px;color:#000;">600.20</span>
<span class="t" style="right:520.0px;top:191.0px;height:15px;line-height:15px;font-size:11px;color:#000;">55,10</span>
<span class="t" style="left:1398.0px;top:191.0px;height:15px;line-height:15px;font-size:11px;letter-spacing:0.000px;color:#000;">391.20</span>
<span class="t" style="right:220.0px;top:191.0px;height:15px;line-height:15px;font-size:11px;color:#000;">0,00</span>
<span class="t" style="left:1698.0px;top:191.0px;height:15px;line-height:15px;font-size:11px;letter-spacing:0.000px;color:#000;">600.18</span>
<span class="t" style="right:20.0px;top:191.0px;height:15px;line-height:15px;font-size:11px;color:#000;">0,00</span>
<span class="t" style="left:1898.0px;top:191.0px;height:15px;line-height:15px;font-size:11px;letter-spacing:0.000px;color:#000;">391.18</span>
<div class="b" style="left:40px;top:230px;width:1870px;height:1px;background:#a0a0a0;"></div>
<div class="b" style="left:3px;top:230px;width:37px;height:1px;background:#a0a0a0;"></div>
<div class="b" style="left:3px;top:231px;width:37px;height:1px;background:#fff;"></div>
<span class="t" style="left:11px;top:211.5px;width:24px;text-align:center;height:16px;line-height:16px;font-size:11px;">7</span>
<span class="t" style="left:43.0px;top:213.0px;height:15px;line-height:15px;font-size:11px;letter-spacing:-0.092px;color:#000;">E-Arşiv Fatura</span>
<span class="t" style="left:143.0px;top:213.0px;height:15px;line-height:15px;font-size:11px;letter-spacing:0.030px;color:#000;">Istisna</span>
<span class="t" style="left:243.0px;top:213.0px;height:15px;line-height:15px;font-size:11px;letter-spacing:0.070px;color:#000;">EF12024001115...</span>
<span class="t" style="left:347.0px;top:213.0px;height:15px;line-height:15px;font-size:11px;letter-spacing:0.118px;color:#000;">5.03.2024</span>
<span class="t" style="left:446.0px;top:213.0px;height:15px;line-height:15px;font-size:11px;letter-spacing:-0.242px;color:#000;">Yılmazlar Tic</span>
<span class="t" style="left:519.0px;top:213.0px;height:15px;line-height:15px;font-size:11px;letter-spacing:0.000px;color:#000;">100.01</span>
<span class="t" style="right:1120.0px;top:213.0px;height:15px;line-height:15px;font-size:11px;color:#000;">275,50</span>
<span class="t" style="right:1020.0px;top:213.0px;height:15px;line-height:15px;font-size:11px;color:#000;">55,10</span>
<span class="t" style="right:920.0px;top:213.0px;height:15px;line-height:15px;font-size:11px;color:#000;">330,60</span>
<span class="t" style="right:720.0px;top:213.0px;height:15px;line-height:15px;font-size:11px;color:#000;">275,50</span>
<span class="t" style="left:1198.0px;top:213.0px;height:15px;line-height:15px;font-size:11px;letter-spacing:0.000px;color:#000;">600.20</span>
<span class="t" style="right:520.0px;top:213.0px;height:15px;line-height:15px;font-size:11px;color:#000;">55,10</span>
<span class="t" style="left:1398.0px;top:213.0px;height:15px;line-height:15px;font-size:11px;letter-spacing:0.000px;color:#000;">391.20</span>
<span class="t" style="right:220.0px;top:213.0px;height:15px;line-height:15px;font-size:11px;color:#000;">0,00</span>
<span class="t" style="left:1698.0px;top:213.0px;height:15px;line-height:15px;font-size:11px;letter-spacing:0.000px;color:#000;">600.18</span>
<span class="t" style="right:20.0px;top:213.0px;height:15px;line-height:15px;font-size:11px;color:#000;">0,00</span>
<span class="t" style="left:1898.0px;top:213.0px;height:15px;line-height:15px;font-size:11px;letter-spacing:0.000px;color:#000;">391.18</span>
<div class="b" style="left:40px;top:252px;width:1870px;height:1px;background:#a0a0a0;"></div>
<div class="b" style="left:3px;top:252px;width:37px;height:1px;background:#a0a0a0;"></div>
<div class="b" style="left:3px;top:253px;width:37px;height:1px;background:#fff;"></div>
<span class="t" style="left:11px;top:233.5px;width:24px;text-align:center;height:16px;line-height:16px;font-size:11px;">8</span>
<span class="t" style="left:43.0px;top:235.0px;height:15px;line-height:15px;font-size:11px;letter-spacing:-0.099px;color:#000;">E-Fatura</span>
<span class="t" style="left:143.0px;top:235.0px;height:15px;line-height:15px;font-size:11px;letter-spacing:0.030px;color:#000;">Istisna</span>
<span class="t" style="left:243.0px;top:235.0px;height:15px;line-height:15px;font-size:11px;letter-spacing:0.070px;color:#000;">EF12024001115...</span>
<span class="t" style="left:347.0px;top:235.0px;height:15px;line-height:15px;font-size:11px;letter-spacing:0.118px;color:#000;">6.03.2024</span>
<span class="t" style="left:446.0px;top:235.0px;height:15px;line-height:15px;font-size:11px;letter-spacing:-0.284px;color:#000;">Akyüz Gıda</span>
<span class="t" style="left:519.0px;top:235.0px;height:15px;line-height:15px;font-size:11px;letter-spacing:0.000px;color:#000;">100.01</span>
<span class="t" style="right:1120.0px;top:235.0px;height:15px;line-height:15px;font-size:11px;color:#000;">275,50</span>
<span class="t" style="right:1020.0px;top:235.0px;height:15px;line-height:15px;font-size:11px;color:#000;">55,10</span>
<span class="t" style="right:920.0px;top:235.0px;height:15px;line-height:15px;font-size:11px;color:#000;">330,60</span>
<span class="t" style="right:720.0px;top:235.0px;height:15px;line-height:15px;font-size:11px;color:#000;">275,50</span>
<span class="t" style="left:1198.0px;top:235.0px;height:15px;line-height:15px;font-size:11px;letter-spacing:0.000px;color:#000;">600.20</span>
<span class="t" style="right:520.0px;top:235.0px;height:15px;line-height:15px;font-size:11px;color:#000;">55,10</span>
<span class="t" style="left:1398.0px;top:235.0px;height:15px;line-height:15px;font-size:11px;letter-spacing:0.000px;color:#000;">391.20</span>
<span class="t" style="right:220.0px;top:235.0px;height:15px;line-height:15px;font-size:11px;color:#000;">0,00</span>
<span class="t" style="left:1698.0px;top:235.0px;height:15px;line-height:15px;font-size:11px;letter-spacing:0.000px;color:#000;">600.18</span>
<span class="t" style="right:20.0px;top:235.0px;height:15px;line-height:15px;font-size:11px;color:#000;">0,00</span>
<span class="t" style="left:1898.0px;top:235.0px;height:15px;line-height:15px;font-size:11px;letter-spacing:0.000px;color:#000;">391.18</span>
<div class="b" style="left:40px;top:274px;width:1870px;height:1px;background:#a0a0a0;"></div>
<div class="b" style="left:3px;top:274px;width:37px;height:1px;background:#a0a0a0;"></div>
<div class="b" style="left:3px;top:275px;width:37px;height:1px;background:#fff;"></div>
<span class="t" style="left:11px;top:255.5px;width:24px;text-align:center;height:16px;line-height:16px;font-size:11px;">9</span>
<span class="t" style="left:43.0px;top:257.0px;height:15px;line-height:15px;font-size:11px;letter-spacing:-0.099px;color:#000;">E-Fatura</span>
<span class="t" style="left:143.0px;top:257.0px;height:15px;line-height:15px;font-size:11px;letter-spacing:0.030px;color:#000;">Istisna</span>
<span class="t" style="left:243.0px;top:257.0px;height:15px;line-height:15px;font-size:11px;letter-spacing:0.070px;color:#000;">EF12024001115...</span>
<span class="t" style="left:347.0px;top:257.0px;height:15px;line-height:15px;font-size:11px;letter-spacing:0.118px;color:#000;">6.03.2024</span>
<span class="t" style="left:446.0px;top:257.0px;height:15px;line-height:15px;font-size:11px;letter-spacing:-0.275px;color:#000;">Bütüner Paz</span>
<span class="t" style="left:519.0px;top:257.0px;height:15px;line-height:15px;font-size:11px;letter-spacing:0.000px;color:#000;">100.01</span>
<span class="t" style="right:1120.0px;top:257.0px;height:15px;line-height:15px;font-size:11px;color:#000;">275,50</span>
<span class="t" style="right:1020.0px;top:257.0px;height:15px;line-height:15px;font-size:11px;color:#000;">55,10</span>
<span class="t" style="right:920.0px;top:257.0px;height:15px;line-height:15px;font-size:11px;color:#000;">330,60</span>
<span class="t" style="right:720.0px;top:257.0px;height:15px;line-height:15px;font-size:11px;color:#000;">275,50</span>
<span class="t" style="left:1198.0px;top:257.0px;height:15px;line-height:15px;font-size:11px;letter-spacing:0.000px;color:#000;">600.20</span>
<span class="t" style="right:520.0px;top:257.0px;height:15px;line-height:15px;font-size:11px;color:#000;">55,10</span>
<span class="t" style="left:1398.0px;top:257.0px;height:15px;line-height:15px;font-size:11px;letter-spacing:0.000px;color:#000;">391.20</span>
<span class="t" style="right:220.0px;top:257.0px;height:15px;line-height:15px;font-size:11px;color:#000;">0,00</span>
<span class="t" style="left:1698.0px;top:257.0px;height:15px;line-height:15px;font-size:11px;letter-spacing:0.000px;color:#000;">600.18</span>
<span class="t" style="right:20.0px;top:257.0px;height:15px;line-height:15px;font-size:11px;color:#000;">0,00</span>
<span class="t" style="left:1898.0px;top:257.0px;height:15px;line-height:15px;font-size:11px;letter-spacing:0.000px;color:#000;">391.18</span>
<div class="b" style="left:40px;top:296px;width:1870px;height:1px;background:#a0a0a0;"></div>
<div class="b" style="left:3px;top:296px;width:37px;height:1px;background:#a0a0a0;"></div>
<div class="b" style="left:3px;top:297px;width:37px;height:1px;background:#fff;"></div>
<span class="t" style="left:11px;top:277.5px;width:24px;text-align:center;height:16px;line-height:16px;font-size:11px;">10</span>
<span class="t" style="left:43.0px;top:279.0px;height:15px;line-height:15px;font-size:11px;letter-spacing:-0.099px;color:#000;">E-Fatura</span>
<span class="t" style="left:143.0px;top:279.0px;height:15px;line-height:15px;font-size:11px;letter-spacing:0.030px;color:#000;">Istisna</span>
<span class="t" style="left:243.0px;top:279.0px;height:15px;line-height:15px;font-size:11px;letter-spacing:0.070px;color:#000;">EF12024001115...</span>
<span class="t" style="left:347.0px;top:279.0px;height:15px;line-height:15px;font-size:11px;letter-spacing:0.118px;color:#000;">6.03.2024</span>
<span class="t" style="left:446.0px;top:279.0px;height:15px;line-height:15px;font-size:11px;letter-spacing:-0.260px;color:#000;">Polat Gıda</span>
<span class="t" style="left:519.0px;top:279.0px;height:15px;line-height:15px;font-size:11px;letter-spacing:0.000px;color:#000;">100.01</span>
<span class="t" style="right:1120.0px;top:279.0px;height:15px;line-height:15px;font-size:11px;color:#000;">275,50</span>
<span class="t" style="right:1020.0px;top:279.0px;height:15px;line-height:15px;font-size:11px;color:#000;">55,10</span>
<span class="t" style="right:920.0px;top:279.0px;height:15px;line-height:15px;font-size:11px;color:#000;">330,60</span>
<span class="t" style="right:720.0px;top:279.0px;height:15px;line-height:15px;font-size:11px;color:#000;">275,50</span>
<span class="t" style="left:1198.0px;top:279.0px;height:15px;line-height:15px;font-size:11px;letter-spacing:0.000px;color:#000;">600.20</span>
<span class="t" style="right:520.0px;top:279.0px;height:15px;line-height:15px;font-size:11px;color:#000;">55,10</span>
<span class="t" style="left:1398.0px;top:279.0px;height:15px;line-height:15px;font-size:11px;letter-spacing:0.000px;color:#000;">391.20</span>
<span class="t" style="right:220.0px;top:279.0px;height:15px;line-height:15px;font-size:11px;color:#000;">0,00</span>
<span class="t" style="left:1698.0px;top:279.0px;height:15px;line-height:15px;font-size:11px;letter-spacing:0.000px;color:#000;">600.18</span>
<span class="t" style="right:20.0px;top:279.0px;height:15px;line-height:15px;font-size:11px;color:#000;">0,00</span>
<span class="t" style="left:1898.0px;top:279.0px;height:15px;line-height:15px;font-size:11px;letter-spacing:0.000px;color:#000;">391.18</span>
<div class="b" style="left:40px;top:318px;width:1870px;height:1px;background:#a0a0a0;"></div>
<div class="b" style="left:3px;top:318px;width:37px;height:1px;background:#a0a0a0;"></div>
<div class="b" style="left:3px;top:319px;width:37px;height:1px;background:#fff;"></div>
<span class="t" style="left:11px;top:299.5px;width:24px;text-align:center;height:16px;line-height:16px;font-size:11px;">11</span>
<span class="t" style="left:43.0px;top:301.0px;height:15px;line-height:15px;font-size:11px;letter-spacing:-0.099px;color:#000;">E-Fatura</span>
<span class="t" style="left:143.0px;top:301.0px;height:15px;line-height:15px;font-size:11px;letter-spacing:-0.414px;color:#000;">Satış</span>
<span class="t" style="left:243.0px;top:301.0px;height:15px;line-height:15px;font-size:11px;letter-spacing:0.070px;color:#000;">EF12024001115...</span>
<span class="t" style="left:347.0px;top:301.0px;height:15px;line-height:15px;font-size:11px;letter-spacing:0.118px;color:#000;">6.03.2024</span>
<span class="t" style="left:446.0px;top:301.0px;height:15px;line-height:15px;font-size:11px;letter-spacing:-0.245px;color:#000;">Deniz Plastik</span>
<span class="t" style="left:519.0px;top:301.0px;height:15px;line-height:15px;font-size:11px;letter-spacing:0.000px;color:#000;">100.01</span>
<span class="t" style="right:1120.0px;top:301.0px;height:15px;line-height:15px;font-size:11px;color:#000;">275,50</span>
<span class="t" style="right:1020.0px;top:301.0px;height:15px;line-height:15px;font-size:11px;color:#000;">55,10</span>
<span class="t" style="right:920.0px;top:301.0px;height:15px;line-height:15px;font-size:11px;color:#000;">330,60</span>
<span class="t" style="right:720.0px;top:301.0px;height:15px;line-height:15px;font-size:11px;color:#000;">275,50</span>
<span class="t" style="left:1198.0px;top:301.0px;height:15px;line-height:15px;font-size:11px;letter-spacing:0.000px;color:#000;">600.20</span>
<span class="t" style="right:520.0px;top:301.0px;height:15px;line-height:15px;font-size:11px;color:#000;">55,10</span>
<span class="t" style="left:1398.0px;top:301.0px;height:15px;line-height:15px;font-size:11px;letter-spacing:0.000px;color:#000;">391.20</span>
<span class="t" style="right:220.0px;top:301.0px;height:15px;line-height:15px;font-size:11px;color:#000;">0,00</span>
<span class="t" style="left:1698.0px;top:301.0px;height:15px;line-height:15px;font-size:11px;letter-spacing:0.000px;color:#000;">600.18</span>
<span class="t" style="right:20.0px;top:301.0px;height:15px;line-height:15px;font-size:11px;color:#000;">0,00</span>
<span class="t" style="left:1898.0px;top:301.0px;height:15px;line-height:15px;font-size:11px;letter-spacing:0.000px;color:#000;">391.18</span>
<div class="b" style="left:40px;top:340px;width:1870px;height:1px;background:#a0a0a0;"></div>
<div class="b" style="left:3px;top:340px;width:37px;height:1px;background:#a0a0a0;"></div>
<div class="b" style="left:3px;top:341px;width:37px;height:1px;background:#fff;"></div>
<span class="t" style="left:11px;top:321.5px;width:24px;text-align:center;height:16px;line-height:16px;font-size:11px;">12</span>
<span class="t" style="left:43.0px;top:323.0px;height:15px;line-height:15px;font-size:11px;letter-spacing:-0.092px;color:#000;">E-Arşiv Fatura</span>
<span class="t" style="left:143.0px;top:323.0px;height:15px;line-height:15px;font-size:11px;letter-spacing:-0.414px;color:#000;">Satış</span>
<span class="t" style="left:243.0px;top:323.0px;height:15px;line-height:15px;font-size:11px;letter-spacing:0.062px;color:#000;">EA12024001115...</span>
<span class="t" style="left:347.0px;top:323.0px;height:15px;line-height:15px;font-size:11px;letter-spacing:0.118px;color:#000;">6.03.2024</span>
<span class="t" style="left:446.0px;top:323.0px;height:15px;line-height:15px;font-size:11px;letter-spacing:-0.233px;color:#000;">Kırlangıç Kır</span>
<span class="t" style="left:519.0px;top:323.0px;height:15px;line-height:15px;font-size:11px;letter-spacing:0.000px;color:#000;">100.01</span>
<span class="t" style="right:1120.0px;top:323.0px;height:15px;line-height:15px;font-size:11px;color:#000;">275,50</span>
<span class="t" style="right:1020.0px;top:323.0px;height:15px;line-height:15px;font-size:11px;color:#000;">55,10</span>
<span class="t" style="right:920.0px;top:323.0px;height:15px;line-height:15px;font-size:11px;color:#000;">330,60</span>
<span class="t" style="right:720.0px;top:323.0px;height:15px;line-height:15px;font-size:11px;color:#000;">275,50</span>
<span class="t" style="left:1198.0px;top:323.0px;height:15px;line-height:15px;font-size:11px;letter-spacing:0.000px;color:#000;">600.20</span>
<span class="t" style="right:520.0px;top:323.0px;height:15px;line-height:15px;font-size:11px;color:#000;">55,10</span>
<span class="t" style="left:1398.0px;top:323.0px;height:15px;line-height:15px;font-size:11px;letter-spacing:0.000px;color:#000;">391.20</span>
<span class="t" style="right:220.0px;top:323.0px;height:15px;line-height:15px;font-size:11px;color:#000;">0,00</span>
<span class="t" style="left:1698.0px;top:323.0px;height:15px;line-height:15px;font-size:11px;letter-spacing:0.000px;color:#000;">600.18</span>
<span class="t" style="right:20.0px;top:323.0px;height:15px;line-height:15px;font-size:11px;color:#000;">0,00</span>
<span class="t" style="left:1898.0px;top:323.0px;height:15px;line-height:15px;font-size:11px;letter-spacing:0.000px;color:#000;">391.18</span>
<div class="b" style="left:40px;top:362px;width:1870px;height:1px;background:#a0a0a0;"></div>
<div class="b" style="left:3px;top:362px;width:37px;height:1px;background:#a0a0a0;"></div>
<div class="b" style="left:3px;top:363px;width:37px;height:1px;background:#fff;"></div>
<span class="t" style="left:11px;top:343.5px;width:24px;text-align:center;height:16px;line-height:16px;font-size:11px;">13</span>
<span class="t" style="left:43.0px;top:345.0px;height:15px;line-height:15px;font-size:11px;letter-spacing:-0.099px;color:#000;">E-Fatura</span>
<span class="t" style="left:143.0px;top:345.0px;height:15px;line-height:15px;font-size:11px;letter-spacing:-0.414px;color:#000;">Satış</span>
<span class="t" style="left:243.0px;top:345.0px;height:15px;line-height:15px;font-size:11px;letter-spacing:0.070px;color:#000;">EF12024001115...</span>
<span class="t" style="left:347.0px;top:345.0px;height:15px;line-height:15px;font-size:11px;letter-spacing:0.118px;color:#000;">6.03.2024</span>
<span class="t" style="left:446.0px;top:345.0px;height:15px;line-height:15px;font-size:11px;letter-spacing:-0.266px;color:#000;">Durgun İnşaat</span>
<span class="t" style="left:519.0px;top:345.0px;height:15px;line-height:15px;font-size:11px;letter-spacing:0.000px;color:#000;">100.01</span>
<span class="t" style="right:1120.0px;top:345.0px;height:15px;line-height:15px;font-size:11px;color:#000;">275,50</span>
<span class="t" style="right:1020.0px;top:345.0px;height:15px;line-height:15px;font-size:11px;color:#000;">55,10</span>
<span class="t" style="right:920.0px;top:345.0px;height:15px;line-height:15px;font-size:11px;color:#000;">330,60</span>
<span class="t" style="right:720.0px;top:345.0px;height:15px;line-height:15px;font-size:11px;color:#000;">275,50</span>
<span class="t" style="left:1198.0px;top:345.0px;height:15px;line-height:15px;font-size:11px;letter-spacing:0.000px;color:#000;">600.20</span>
<span class="t" style="right:520.0px;top:345.0px;height:15px;line-height:15px;font-size:11px;color:#000;">55,10</span>
<span class="t" style="left:1398.0px;top:345.0px;height:15px;line-height:15px;font-size:11px;letter-spacing:0.000px;color:#000;">391.20</span>
<span class="t" style="right:220.0px;top:345.0px;height:15px;line-height:15px;font-size:11px;color:#000;">0,00</span>
<span class="t" style="left:1698.0px;top:345.0px;height:15px;line-height:15px;font-size:11px;letter-spacing:0.000px;color:#000;">600.18</span>
<span class="t" style="right:20.0px;top:345.0px;height:15px;line-height:15px;font-size:11px;color:#000;">0,00</span>
<span class="t" style="left:1898.0px;top:345.0px;height:15px;line-height:15px;font-size:11px;letter-spacing:0.000px;color:#000;">391.18</span>
<div class="b" style="left:40px;top:384px;width:1870px;height:1px;background:#a0a0a0;"></div>
<div class="b" style="left:3px;top:384px;width:37px;height:1px;background:#a0a0a0;"></div>
<div class="b" style="left:3px;top:385px;width:37px;height:1px;background:#fff;"></div>
<span class="t" style="left:11px;top:365.5px;width:24px;text-align:center;height:16px;line-height:16px;font-size:11px;">14</span>
<span class="t" style="left:43.0px;top:367.0px;height:15px;line-height:15px;font-size:11px;letter-spacing:-0.099px;color:#000;">E-Fatura</span>
<span class="t" style="left:143.0px;top:367.0px;height:15px;line-height:15px;font-size:11px;letter-spacing:-0.414px;color:#000;">Satış</span>
<span class="t" style="left:243.0px;top:367.0px;height:15px;line-height:15px;font-size:11px;letter-spacing:0.070px;color:#000;">EF12024001115...</span>
<span class="t" style="left:347.0px;top:367.0px;height:15px;line-height:15px;font-size:11px;letter-spacing:0.118px;color:#000;">7.03.2024</span>
<span class="t" style="left:446.0px;top:367.0px;height:15px;line-height:15px;font-size:11px;letter-spacing:-0.294px;color:#000;">Kaptan Mak</span>
<span class="t" style="left:519.0px;top:367.0px;height:15px;line-height:15px;font-size:11px;letter-spacing:0.000px;color:#000;">100.01</span>
<span class="t" style="right:1120.0px;top:367.0px;height:15px;line-height:15px;font-size:11px;color:#000;">275,50</span>
<span class="t" style="right:1020.0px;top:367.0px;height:15px;line-height:15px;font-size:11px;color:#000;">55,10</span>
<span class="t" style="right:920.0px;top:367.0px;height:15px;line-height:15px;font-size:11px;color:#000;">330,60</span>
<span class="t" style="right:720.0px;top:367.0px;height:15px;line-height:15px;font-size:11px;color:#000;">275,50</span>
<span class="t" style="left:1198.0px;top:367.0px;height:15px;line-height:15px;font-size:11px;letter-spacing:0.000px;color:#000;">600.20</span>
<span class="t" style="right:520.0px;top:367.0px;height:15px;line-height:15px;font-size:11px;color:#000;">55,10</span>
<span class="t" style="left:1398.0px;top:367.0px;height:15px;line-height:15px;font-size:11px;letter-spacing:0.000px;color:#000;">391.20</span>
<span class="t" style="right:220.0px;top:367.0px;height:15px;line-height:15px;font-size:11px;color:#000;">0,00</span>
<span class="t" style="left:1698.0px;top:367.0px;height:15px;line-height:15px;font-size:11px;letter-spacing:0.000px;color:#000;">600.18</span>
<span class="t" style="right:20.0px;top:367.0px;height:15px;line-height:15px;font-size:11px;color:#000;">0,00</span>
<span class="t" style="left:1898.0px;top:367.0px;height:15px;line-height:15px;font-size:11px;letter-spacing:0.000px;color:#000;">391.18</span>
<div class="b" style="left:40px;top:406px;width:1870px;height:1px;background:#a0a0a0;"></div>
<div class="b" style="left:3px;top:406px;width:37px;height:1px;background:#a0a0a0;"></div>
<span class="t" style="left:11px;top:387.5px;width:24px;text-align:center;height:16px;line-height:16px;font-size:11px;">15</span>
<svg style="left:6px;top:83px" width="6" height="9" viewBox="0 0 6 9"><path d="M0.5 0.5v8l5-4z" fill="#333"/></svg>
<span class="t" style="left:7px;top:387.5px;font-size:15px;font-weight:bold;height:14px;line-height:21px;color:#333;">*</span>
</div>
<div class="b" style="left:5px;top:952px;width:1910px;height:16px;background:#f0f0f0;"></div>
<div class="b" style="left:22px;top:952px;width:722px;height:16px;background:#cdcdcd;"></div>
<svg style="left:9px;top:955px" width="8" height="10" viewBox="0 0 8 10"><path d="M6 1L2 5L6 9" fill="none" stroke="#505050" stroke-width="1.7"/></svg>
<svg style="left:1903px;top:955px" width="8" height="10" viewBox="0 0 8 10"><path d="M2 1L6 5L2 9" fill="none" stroke="#505050" stroke-width="1.7"/></svg>
<div class="b" style="left:1px;top:992px;width:1500px;height:1px;background:#e3e3e3;"></div>
<div class="b" style="left:0px;top:1015px;width:1920px;height:1px;background:#a0a0a0;"></div>
<div class="b" style="left:0px;top:1016px;width:1920px;height:24px;background:#f0f0f0;"></div>
<div class="b" style="left:3px;top:995px;width:87px;height:17px;border-left:1px solid #b4b4b4;border-top:1px solid #b4b4b4;border-right:1px solid #fff;border-bottom:1px solid #fff;"></div>
<span class="t" style="left:7.0px;top:996.0px;height:17px;line-height:17px;font-size:12px;letter-spacing:-0.503px;color:#000;">Fatura Sayısı:14</span>
<div class="b" style="left:93px;top:994px;width:72px;height:19px;background:#008000;border:1px solid #006400;box-shadow:0 0 0 1px #f0f0f0 inset;"></div>
<span class="t" style="left:101.0px;top:996.0px;height:17px;line-height:17px;font-size:12px;letter-spacing:-0.428px;color:#fff;">Bakiye:0,00</span>
<div class="b" style="left:166px;top:995px;width:161px;height:17px;border-left:1px solid #b4b4b4;border-top:1px solid #b4b4b4;border-right:1px solid #fff;border-bottom:1px solid #fff;"></div>
<span class="t" style="left:173.0px;top:996.0px;height:17px;line-height:17px;font-size:12px;letter-spacing:-0.267px;color:#000;">Kdv Hariç Toplam:125.130,80</span>
<div class="b" style="left:329px;top:995px;width:126px;height:17px;border-left:1px solid #b4b4b4;border-top:1px solid #b4b4b4;border-right:1px solid #fff;border-bottom:1px solid #fff;"></div>
<span class="t" style="left:337.5px;top:996.0px;height:17px;line-height:17px;font-size:12px;letter-spacing:-0.371px;color:#000;">Toplam Kdv:24.780,82</span>
<div class="b" style="left:457px;top:995px;width:105px;height:17px;border-left:1px solid #b4b4b4;border-top:1px solid #b4b4b4;border-right:1px solid #fff;border-bottom:1px solid #fff;"></div>
<span class="t" style="left:464.0px;top:996.0px;height:17px;line-height:17px;font-size:12px;letter-spacing:-0.284px;color:#000;">Diğer Vergiler:0,00</span>
<div class="b" style="left:564px;top:995px;width:142px;height:17px;border-left:1px solid #b4b4b4;border-top:1px solid #b4b4b4;border-right:1px solid #fff;border-bottom:1px solid #fff;"></div>
<span class="t" style="left:572.5px;top:996.0px;height:17px;line-height:17px;font-size:12px;letter-spacing:-0.362px;color:#000;">Genel Toplam:149.911,62</span>
<div class="b" style="left:711px;top:995px;width:1px;height:17px;background:#a0a0a0;"></div>
<div class="b" style="left:712px;top:995px;width:1px;height:17px;background:#fff;"></div>
<div class="b" style="left:1664px;top:985px;width:128px;height:21px;background:#e1e1e1;border:1px solid #adadad;"></div>
<div class="b" style="left:1667px;top:988px;width:122px;height:15px;background:#008000;"></div>
<span class="t" style="left:1671.5px;top:986.5px;height:18px;line-height:18px;font-size:12.5px;font-weight:bold;letter-spacing:-0.052px;color:#fff;">DIŞARI AKTAR - F2</span>
<div class="b" style="left:1800px;top:985px;width:115px;height:21px;background:#e1e1e1;border:1px solid #adadad;"></div>
<div class="b" style="left:1803px;top:988px;width:109px;height:15px;background:#cd5c5c;"></div>
<span class="t" style="left:1814.0px;top:986.5px;height:18px;line-height:18px;font-size:12.5px;font-weight:bold;letter-spacing:-0.248px;color:#fff;">VAZGEÇ - ESC</span>
<div class="b" style="left:1px;top:1019px;width:47px;height:17px;border-left:1px solid #c8c8c8;border-top:1px solid #c8c8c8;border-right:1px solid #fff;border-bottom:1px solid #fff;"></div>
<span class="t" style="left:6.5px;top:1020.5px;height:17px;line-height:17px;font-size:12px;letter-spacing:-1.235px;color:#000;">DEBUG</span>
<div class="b" style="left:49px;top:1019px;width:96px;height:17px;border-left:1px solid #c8c8c8;border-top:1px solid #c8c8c8;border-right:1px solid #fff;border-bottom:1px solid #fff;"></div>
<span class="t" style="left:54.0px;top:1020.5px;height:17px;line-height:17px;font-size:12px;letter-spacing:-0.374px;color:#000;">Versiyon : 5.1.0.0</span>
<div class="b" style="left:502px;top:273px;width:918px;height:486px;background:#f0f0f0;border:3px solid #c4045c;box-shadow:0 4px 14px 2px rgba(0,0,0,0.38);"></div>
<div class="b" style="left:505px;top:276px;width:912px;height:30px;background:#fff;"></div>
<svg style="left:511.5px;top:283.5px" width="15" height="15" viewBox="0 0 15 15"><circle cx="7.5" cy="7.5" r="7.5" fill="#c8085f"/><text x="7.5" y="10.74" font-family="Liberation Sans,sans-serif" font-weight="bold" font-size="9" fill="#fff" text-anchor="middle">F</text></svg>
<span class="t" style="left:532.0px;top:282.5px;height:17px;line-height:17px;font-size:12px;letter-spacing:-0.304px;color:#000;">Seçenekler</span>
<svg style="left:1396.5px;top:284.5px" width="11" height="11" viewBox="0 0 11 11"><path d="M0.5 0.5l10 10M10.5 0.5l-10 10" stroke="#222" stroke-width="1.1" fill="none"/></svg>
<div class="b" style="left:505px;top:306px;width:912px;height:29px;background:#f0f0f0;"></div>
<div class="b" style="left:505px;top:308px;width:837px;height:1px;background:#fafafa;"></div>
<div class="b" style="left:954px;top:308px;width:1px;height:26px;background:#dcdcdc;"></div>
<div class="b" style="left:953px;top:308px;width:1px;height:26px;background:#f8f8f8;"></div>
<div class="b" style="left:1054px;top:308px;width:1px;height:26px;background:#dcdcdc;"></div>
<div class="b" style="left:1053px;top:308px;width:1px;height:26px;background:#f8f8f8;"></div>
<div class="b" style="left:1214px;top:308px;width:1px;height:26px;background:#dcdcdc;"></div>
<div class="b" style="left:1213px;top:308px;width:1px;height:26px;background:#f8f8f8;"></div>
<div class="b" style="left:1302px;top:308px;width:1px;height:26px;background:#dcdcdc;"></div>
<div class="b" style="left:1301px;top:308px;width:1px;height:26px;background:#f8f8f8;"></div>
<div class="b" style="left:1341px;top:308px;width:1px;height:26px;background:#dcdcdc;"></div>
<div class="b" style="left:1340px;top:308px;width:1px;height:26px;background:#f8f8f8;"></div>
<div class="b" style="left:506px;top:334px;width:909px;height:389px;background:#fff;border:1px solid #fff;border-top-color:#e8e8e8;border-right-color:#e8e8e8;"></div>
<span class="t" style="left:511.0px;top:313.5px;height:17px;line-height:17px;font-size:12px;letter-spacing:0.128px;color:#000;">Program ve Fiş Gruplandırma</span>
<span class="t" style="left:822.5px;top:313.5px;height:17px;line-height:17px;font-size:12px;letter-spacing:0.078px;color:#000;">Aktarım Seçenekleri - 2</span>
<span class="t" style="left:961.0px;top:313.5px;height:17px;line-height:17px;font-size:12px;letter-spacing:0.097px;color:#000;">Akıllı Eşleştirme</span>
<span class="t" style="left:1061.0px;top:313.5px;height:17px;line-height:17px;font-size:12px;letter-spacing:0.057px;color:#000;">Hesap Planı Dosya Ayarları</span>
<span class="t" style="left:1221.0px;top:313.5px;height:17px;line-height:17px;font-size:12px;letter-spacing:-0.132px;color:#000;">Kayıtlı VKN'ler</span>
<span class="t" style="left:1308.0px;top:313.5px;height:17px;line-height:17px;font-size:12px;letter-spacing:0.265px;color:#000;">Diğer</span>
<div class="b" style="left:675px;top:306px;width:143px;height:30px;background:#fff;border:3px solid #c4045c;"></div>
<span class="t" style="left:685.0px;top:311.5px;height:17px;line-height:17px;font-size:12px;letter-spacing:0.034px;color:#000;">Aktarım Seçenekleri - 1</span>
<div class="chk" style="left:515px;top:344.5px;"></div>
<span class="t" style="left:534.0px;top:342.5px;height:17px;line-height:17px;font-size:12px;letter-spacing:-0.034px;color:#000;">Kdvsiz Tutarı Yazma (Gms.Net, Mikro BA/BS için)</span>
<div class="chk" style="left:515px;top:369px;"></div>
<span class="t" style="left:534.0px;top:367.0px;height:17px;line-height:17px;font-size:12px;letter-spacing:0.038px;color:#000;">Fatura Türünü Açıklamanın Başına Yaz</span>
<div class="chk" style="left:515px;top:392.5px;"></div>
<span class="t" style="left:534.0px;top:390.5px;height:17px;line-height:17px;font-size:12px;letter-spacing:-0.019px;color:#000;">TC.No/Vergi No'yu her satıra yaz (Gms.Net, Logo, Mikro)</span>
<div class="chk" style="left:515px;top:417.5px;"></div>
<span class="t" style="left:534.0px;top:415.5px;height:17px;line-height:17px;font-size:12px;letter-spacing:0.042px;color:#000;">Kdv Yevmiye Satırları için Ba / Bs işaretle (Luca,Datasoft,Logo,Eta,Mikro için)</span>
<div class="chk" style="left:515px;top:442.5px;"></div>
<span class="t" style="left:534.0px;top:440.5px;height:17px;line-height:17px;font-size:12px;letter-spacing:0.048px;color:#000;">Cari Hesap Yevmiye Satırları İçin Ba / Bs İşaretle</span>
<div class="chk" style="left:515px;top:467.5px;"></div>
<span class="t" style="left:534.0px;top:465.5px;height:17px;line-height:17px;font-size:12px;letter-spacing:0.044px;color:#000;">Alış/Satış Yevmiye Satırları için Ba / Bs işaretle (Luca,Datasoft,Logo,Eta,Mikro için)</span>
<div class="chk" style="left:1022px;top:417px;"></div>
<span class="t" style="left:1041.0px;top:416.0px;height:17px;line-height:17px;font-size:12px;letter-spacing:0.129px;color:#000;">İskonto satırları için Ba/Bs işaretle</span>
<div class="chk" style="left:1022px;top:442px;"></div>
<span class="t" style="left:1041.0px;top:441.0px;height:17px;line-height:17px;font-size:12px;letter-spacing:0.108px;color:#000;">Depozito satırları için Ba/Bs işaretle</span>
<div class="grp" style="left:515px;top:554px;width:492px;height:165px;border-color:#dcdcdc;"></div>
<div class="b" style="left:522px;top:551px;width:111px;height:6px;background:#fff;"></div>
<span class="t" style="left:524.0px;top:546.0px;height:17px;line-height:17px;font-size:12px;letter-spacing:0.049px;color:#000;">Fiş Satır Açıklaması</span>
<div class="b" style="left:521px;top:581px;width:186px;height:109px;background:#fff;border:1px solid #828790;"></div>
<span class="t" style="left:525.0px;top:583.0px;height:17px;line-height:17px;font-size:12px;letter-spacing:-0.500px;color:#000;">ID</span>
<span class="t" style="left:525.0px;top:598.0px;height:17px;line-height:17px;font-size:12px;letter-spacing:0.002px;color:#000;">Fatura Türü</span>
<span class="t" style="left:525.0px;top:613.0px;height:17px;line-height:17px;font-size:12px;letter-spacing:0.074px;color:#000;">Fatura Tipi</span>
<span class="t" style="left:525.0px;top:628.0px;height:17px;line-height:17px;font-size:12px;letter-spacing:0.353px;color:#000;">Resmi No</span>
<span class="t" style="left:525.0px;top:643.0px;height:17px;line-height:17px;font-size:12px;letter-spacing:0.168px;color:#000;">Belge Tarihi</span>
<span class="t" style="left:525.0px;top:658.0px;height:17px;line-height:17px;font-size:12px;letter-spacing:0.208px;color:#000;">Cari Hesap Kodu</span>
<span class="t" style="left:525.0px;top:673.0px;height:17px;line-height:17px;font-size:12px;letter-spacing:0.133px;color:#000;">Ba/Bs Cari Kodu (Luca için)</span>
<div class="b" style="left:689px;top:582px;width:16px;height:107px;background:#f0f0f0;"></div>
<div class="b" style="left:689px;top:600px;width:15px;height:17px;background:#cdcdcd;"></div>
<svg style="left:691.5px;top:588px" width="10" height="7" viewBox="0 0 10 7"><path d="M1 5.5L5 1.5L9 5.5" fill="none" stroke="#505050" stroke-width="1.6"/></svg>
<svg style="left:691.5px;top:676px" width="10" height="7" viewBox="0 0 10 7"><path d="M1 1.5L5 5.5L9 1.5" fill="none" stroke="#505050" stroke-width="1.6"/></svg>
<div class="b" style="left:718px;top:599px;width:26px;height:21px;background:#e1e1e1;border:1px solid #adadad;"></div>
<svg style="left:723px;top:602px" width="16" height="15" viewBox="0 0 16 15"><defs><linearGradient id="gr718" x1="0" y1="0" x2="1" y2="0.35"><stop offset="0" stop-color="#0b57a6"/><stop offset="0.42" stop-color="#1f78cc"/><stop offset="0.45" stop-color="#3893dc"/><stop offset="1" stop-color="#55aeea"/></linearGradient></defs><rect x="0.5" y="0.5" width="15" height="14" rx="1.8" fill="url(#gr718)" stroke="#1565b4"/><path transform="rotate(0 8 7.5)" d="M3 6.5h4.8V4.3l4.8 3.2-4.8 3.2V8.5H3z" fill="#fff"/></svg>
<div class="b" style="left:718px;top:628px;width:26px;height:21px;background:#e1e1e1;border:1px solid #adadad;"></div>
<svg style="left:723px;top:631px" width="16" height="15" viewBox="0 0 16 15"><defs><linearGradient id="gl718" x1="0" y1="0" x2="1" y2="0.35"><stop offset="0" stop-color="#0b57a6"/><stop offset="0.42" stop-color="#1f78cc"/><stop offset="0.45" stop-color="#3893dc"/><stop offset="1" stop-color="#55aeea"/></linearGradient></defs><rect x="0.5" y="0.5" width="15" height="14" rx="1.8" fill="url(#gl718)" stroke="#1565b4"/><path transform="rotate(180 8 7.5)" d="M3 6.5h4.8V4.3l4.8 3.2-4.8 3.2V8.5H3z" fill="#fff"/></svg>
<div class="b" style="left:968px;top:599px;width:26px;height:21px;background:#e1e1e1;border:1px solid #adadad;"></div>
<svg style="left:973px;top:602px" width="16" height="15" viewBox="0 0 16 15"><defs><linearGradient id="gu968" x1="0" y1="0" x2="1" y2="0.35"><stop offset="0" stop-color="#0b57a6"/><stop offset="0.42" stop-color="#1f78cc"/><stop offset="0.45" stop-color="#3893dc"/><stop offset="1" stop-color="#55aeea"/></linearGradient></defs><rect x="0.5" y="0.5" width="15" height="14" rx="1.8" fill="url(#gu968)" stroke="#1565b4"/><path transform="rotate(270 8 7.5)" d="M3 6.5h4.8V4.3l4.8 3.2-4.8 3.2V8.5H3z" fill="#fff"/></svg>
<div class="b" style="left:968px;top:628px;width:26px;height:21px;background:#e1e1e1;border:1px solid #adadad;"></div>
<svg style="left:973px;top:631px" width="16" height="15" viewBox="0 0 16 15"><defs><linearGradient id="gd968" x1="0" y1="0" x2="1" y2="0.35"><stop offset="0" stop-color="#0b57a6"/><stop offset="0.42" stop-color="#1f78cc"/><stop offset="0.45" stop-color="#3893dc"/><stop offset="1" stop-color="#55aeea"/></linearGradient></defs><rect x="0.5" y="0.5" width="15" height="14" rx="1.8" fill="url(#gd968)" stroke="#1565b4"/><path transform="rotate(90 8 7.5)" d="M3 6.5h4.8V4.3l4.8 3.2-4.8 3.2V8.5H3z" fill="#fff"/></svg>
<div class="b" style="left:755px;top:581px;width:206px;height:109px;background:#fff;border:1px solid #828790;"></div>
<div class="b" style="left:757px;top:583px;width:202px;height:15px;background:#0078d7;"></div>
<span class="t" style="left:759.5px;top:583.0px;height:17px;line-height:17px;font-size:12px;letter-spacing:0.125px;color:#fff;">Cari Hesap Unvanı</span>
<span class="t" style="left:759.5px;top:598.0px;height:17px;line-height:17px;font-size:12px;letter-spacing:0.142px;color:#000;">Belge No</span>
<div class="b" style="left:746px;top:553px;width:262px;height:166px;border:3px solid #c4045c;"></div>
<span class="t" style="left:527.0px;top:702.0px;height:17px;line-height:17px;font-size:12px;letter-spacing:-0.094px;color:#000;">Satır Açıklaması Ayracı</span>
<div class="b" style="left:658px;top:699.5px;width:23px;height:20.5px;background:#fff;border:1px solid #7a7a7a;"></div>
<span class="t" style="left:662.0px;top:702.0px;height:17px;line-height:17px;font-size:12px;color:#000;">-</span>
<div class="b" style="left:1167px;top:727px;width:123px;height:21px;background:#e1e1e1;border:1px solid #adadad;"></div>
<div class="b" style="left:1170px;top:730px;width:117px;height:15px;background:#008000;"></div>
<span class="t" style="left:1190.0px;top:728.5px;height:18px;line-height:18px;font-size:12.5px;font-weight:bold;letter-spacing:-0.085px;color:#fff;">KAYDET - F2</span>
<div class="b" style="left:1298px;top:727px;width:115px;height:21px;background:#e1e1e1;border:1px solid #adadad;"></div>
<div class="b" style="left:1301px;top:730px;width:109px;height:15px;background:#cd5c5c;"></div>
<span class="t" style="left:1312.0px;top:728.5px;height:18px;line-height:18px;font-size:12.5px;font-weight:bold;letter-spacing:-0.248px;color:#fff;">VAZGEÇ - ESC</span>
</body></html>
